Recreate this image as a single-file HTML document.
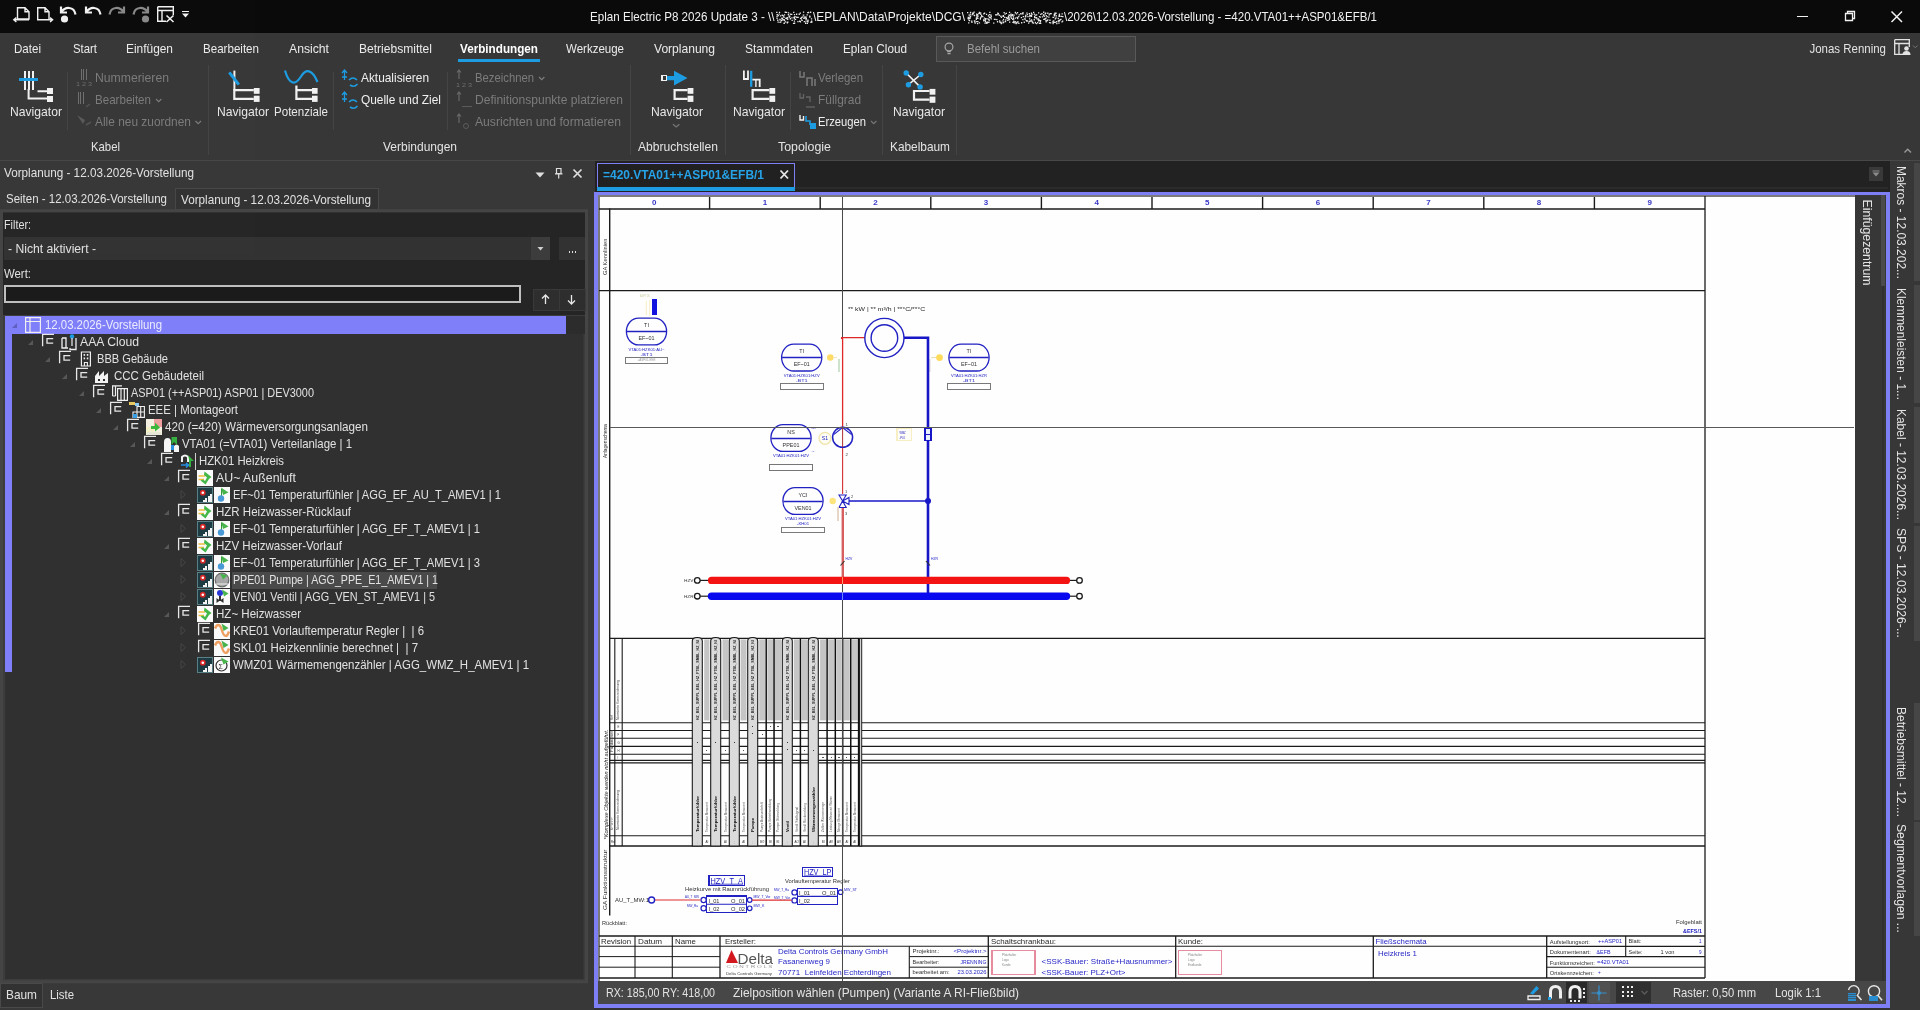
<!DOCTYPE html>
<html lang="de"><head><meta charset="utf-8"><title>Eplan Electric P8 2026</title>
<style>html,body{margin:0;padding:0;background:#383838;overflow:hidden}body{width:1920px;height:1010px;font-family:"Liberation Sans",sans-serif}svg{display:block;font-family:"Liberation Sans",sans-serif;will-change:transform;opacity:.9999}text{white-space:pre}</style></head>
<body>
<svg width="1920" height="1010" viewBox="0 0 1920 1010">
<rect x="0" y="0" width="1920" height="33" fill="#0b0b0b" shape-rendering="crispEdges"/>
<path d="M17.5 19 V7.7 H25 L29 11.7 V19 H17.5 M25 7.7 V11.7 H29" fill="none" stroke="#f2f2f2" stroke-width="1.4"/>
<path d="M29 19.8 H14 M16.4 17.6 L13.8 19.8 L16.4 22" fill="none" stroke="#f2f2f2" stroke-width="1.4"/>
<path d="M37.7 19 V7.7 H45 L49 11.7 V19 M45 7.7 V11.7 H49" fill="none" stroke="#f2f2f2" stroke-width="1.4"/>
<path d="M37 19.8 H52.4 M50 17.6 L52.6 19.8 L50 22" fill="none" stroke="#f2f2f2" stroke-width="1.4"/>
<path d="M61 6.5 V12.5 H67 M61.5 12 C65 6.5 74 6 75.5 14.5" fill="none" stroke="#f2f2f2" stroke-width="2.2"/>
<circle cx="64.5" cy="19" r="3.6" fill="#f2f2f2"/>
<path d="M86 6.5 V12.5 H92 M86.5 12 C90 6.5 99 6 100.5 14.5" fill="none" stroke="#f2f2f2" stroke-width="2.2"/>
<path d="M124 6.5 V12.5 H118 M123.5 12 C120 6.5 111 6 109.5 14.5" fill="none" stroke="#8a8a8a" stroke-width="2.2"/>
<path d="M148 6.5 V12.5 H142 M147.5 12 C144 6.5 135 6 133.5 14.5" fill="none" stroke="#8a8a8a" stroke-width="2.2"/>
<circle cx="145.5" cy="19" r="3.6" fill="#8a8a8a"/>
<path d="M157.7 6.7 H173.3 V15 M157.7 6.7 V21.3 H166 M157.7 10.5 H173.3 M162 10.5 V21.3" fill="none" stroke="#f2f2f2" stroke-width="1.4"/>
<path d="M166.5 15.5 L173.5 22 M173.5 15.5 L166.5 22" fill="none" stroke="#f2f2f2" stroke-width="1.6"/>
<line x1="182" y1="11.5" x2="189" y2="11.5" stroke="#f2f2f2" stroke-width="1.4" shape-rendering="crispEdges"/>
<path d="M182 13.6 H189 L185.5 17.4 Z" fill="#f2f2f2"/>
<line x1="1797" y1="16.5" x2="1808" y2="16.5" stroke="#f2f2f2" stroke-width="1.4" shape-rendering="crispEdges"/>
<path d="M1845.5 13.5 H1852.5 V20.5 H1845.5 Z M1847.5 13.5 V11.5 H1854.5 V18.5 H1852.5" fill="none" stroke="#f2f2f2" stroke-width="1.3"/>
<path d="M1891.5 11.5 L1902 22 M1902 11.5 L1891.5 22" fill="none" stroke="#f2f2f2" stroke-width="1.5"/>
<text x="590" y="21.2" font-size="13" fill="#f2f2f2" textLength="184.5" lengthAdjust="spacingAndGlyphs">Eplan Electric P8 2026 Update 3 - \\</text>
<path d="M780.3 21.2h1.3v1.3h-1.3zM803.0 14.4h1.3v1.3h-1.3zM793.3 16.7h1.3v1.3h-1.3zM799.0 20.6h1.3v1.3h-1.3zM778.9 11.8h1.3v1.3h-1.3zM805.6 16.5h1.3v1.3h-1.3zM802.9 11.5h1.3v1.3h-1.3zM791.5 19.8h1.3v1.3h-1.3zM783.7 22.4h1.3v1.3h-1.3zM808.0 11.9h1.3v1.3h-1.3zM776.4 17.7h1.3v1.3h-1.3zM809.3 15.9h1.3v1.3h-1.3zM783.3 16.4h1.3v1.3h-1.3zM776.5 14.0h1.3v1.3h-1.3zM791.3 17.2h1.3v1.3h-1.3zM783.9 14.2h1.3v1.3h-1.3zM783.4 16.8h1.3v1.3h-1.3zM785.9 11.7h1.3v1.3h-1.3zM805.7 17.9h1.3v1.3h-1.3zM798.6 13.6h1.3v1.3h-1.3zM811.2 21.4h1.3v1.3h-1.3zM779.9 15.3h1.3v1.3h-1.3zM801.5 19.7h1.3v1.3h-1.3zM809.2 16.4h1.3v1.3h-1.3zM805.4 19.2h1.3v1.3h-1.3zM786.4 18.3h1.3v1.3h-1.3zM807.3 21.2h1.3v1.3h-1.3zM793.7 18.3h1.3v1.3h-1.3zM776.7 14.3h1.3v1.3h-1.3zM804.2 16.3h1.3v1.3h-1.3zM781.7 17.8h1.3v1.3h-1.3zM800.8 19.3h1.3v1.3h-1.3zM789.0 16.5h1.3v1.3h-1.3zM793.8 20.5h1.3v1.3h-1.3zM794.3 16.0h1.3v1.3h-1.3zM793.1 11.8h1.3v1.3h-1.3zM777.1 19.6h1.3v1.3h-1.3zM810.9 18.3h1.3v1.3h-1.3zM789.7 13.5h1.3v1.3h-1.3zM793.6 22.8h1.3v1.3h-1.3zM803.2 17.7h1.3v1.3h-1.3zM806.5 14.2h1.3v1.3h-1.3zM794.0 22.5h1.3v1.3h-1.3zM796.3 16.8h1.3v1.3h-1.3zM785.2 17.8h1.3v1.3h-1.3zM810.0 11.6h1.3v1.3h-1.3zM803.7 20.9h1.3v1.3h-1.3zM807.4 20.0h1.3v1.3h-1.3zM804.6 17.5h1.3v1.3h-1.3zM795.7 16.4h1.3v1.3h-1.3zM777.5 21.5h1.3v1.3h-1.3zM796.0 13.8h1.3v1.3h-1.3zM793.7 17.1h1.3v1.3h-1.3zM788.3 15.5h1.3v1.3h-1.3zM794.9 18.7h1.3v1.3h-1.3zM797.5 16.8h1.3v1.3h-1.3zM776.5 14.1h1.3v1.3h-1.3zM781.9 18.2h1.3v1.3h-1.3zM806.5 20.7h1.3v1.3h-1.3zM804.2 20.9h1.3v1.3h-1.3zM784.7 21.2h1.3v1.3h-1.3zM799.7 12.5h1.3v1.3h-1.3zM776.1 11.7h1.3v1.3h-1.3zM802.7 14.4h1.3v1.3h-1.3zM779.4 18.7h1.3v1.3h-1.3zM787.9 12.3h1.3v1.3h-1.3zM781.2 17.6h1.3v1.3h-1.3zM781.6 14.6h1.3v1.3h-1.3zM801.1 16.7h1.3v1.3h-1.3zM787.1 16.9h1.3v1.3h-1.3zM776.4 15.9h1.3v1.3h-1.3zM790.7 13.7h1.3v1.3h-1.3zM779.4 21.8h1.3v1.3h-1.3zM793.9 13.9h1.3v1.3h-1.3zM797.3 20.9h1.3v1.3h-1.3zM776.2 11.7h1.3v1.3h-1.3zM780.8 19.8h1.3v1.3h-1.3zM781.3 19.6h1.3v1.3h-1.3zM799.9 17.8h1.3v1.3h-1.3zM783.4 22.7h1.3v1.3h-1.3zM804.2 17.4h1.3v1.3h-1.3zM783.5 19.0h1.3v1.3h-1.3zM789.7 18.1h1.3v1.3h-1.3zM787.1 18.8h1.3v1.3h-1.3zM777.6 14.9h1.3v1.3h-1.3zM810.3 21.6h1.3v1.3h-1.3zM786.5 21.4h1.3v1.3h-1.3zM786.7 22.3h1.3v1.3h-1.3zM802.3 16.3h1.3v1.3h-1.3zM784.6 11.6h1.3v1.3h-1.3zM807.1 11.9h1.3v1.3h-1.3zM805.0 22.6h1.3v1.3h-1.3zM796.0 13.5h1.3v1.3h-1.3zM806.7 22.7h1.3v1.3h-1.3zM800.8 17.4h1.3v1.3h-1.3zM789.1 15.5h1.3v1.3h-1.3zM782.9 19.3h1.3v1.3h-1.3zM791.1 13.7h1.3v1.3h-1.3zM779.3 19.2h1.3v1.3h-1.3zM786.2 17.2h1.3v1.3h-1.3zM787.2 21.5h1.3v1.3h-1.3zM807.9 11.7h1.3v1.3h-1.3zM782.7 15.3h1.3v1.3h-1.3zM811.0 20.5h1.3v1.3h-1.3zM787.7 13.9h1.3v1.3h-1.3zM799.8 21.1h1.3v1.3h-1.3zM809.1 15.5h1.3v1.3h-1.3zM807.3 19.4h1.3v1.3h-1.3zM792.9 22.8h1.3v1.3h-1.3zM783.9 19.8h1.3v1.3h-1.3zM778.5 13.5h1.3v1.3h-1.3z" fill="#e8e8e8"/>
<text x="813" y="21.2" font-size="13" fill="#f2f2f2" textLength="152" lengthAdjust="spacingAndGlyphs">\EPLAN\Data\Projekte\DCG\</text>
<path d="M1058.3 22.4h1.3v1.3h-1.3zM971.9 12.5h1.3v1.3h-1.3zM1046.7 20.0h1.3v1.3h-1.3zM1030.8 15.0h1.3v1.3h-1.3zM1024.7 18.5h1.3v1.3h-1.3zM1022.3 13.3h1.3v1.3h-1.3zM1007.8 16.0h1.3v1.3h-1.3zM1035.9 22.9h1.3v1.3h-1.3zM1057.6 17.8h1.3v1.3h-1.3zM1009.2 14.6h1.3v1.3h-1.3zM969.9 11.8h1.3v1.3h-1.3zM1011.1 15.2h1.3v1.3h-1.3zM1003.0 21.8h1.3v1.3h-1.3zM1017.0 17.9h1.3v1.3h-1.3zM989.2 11.8h1.3v1.3h-1.3zM997.7 13.1h1.3v1.3h-1.3zM1015.5 23.0h1.3v1.3h-1.3zM1031.3 13.6h1.3v1.3h-1.3zM1052.3 20.7h1.3v1.3h-1.3zM1037.0 21.9h1.3v1.3h-1.3zM1039.7 20.6h1.3v1.3h-1.3zM1000.5 22.8h1.3v1.3h-1.3zM1058.8 13.4h1.3v1.3h-1.3zM1038.9 19.7h1.3v1.3h-1.3zM1010.8 17.6h1.3v1.3h-1.3zM1013.5 22.1h1.3v1.3h-1.3zM1014.6 21.1h1.3v1.3h-1.3zM1000.5 21.7h1.3v1.3h-1.3zM1052.9 16.8h1.3v1.3h-1.3zM1021.0 22.1h1.3v1.3h-1.3zM1036.0 17.1h1.3v1.3h-1.3zM987.8 15.2h1.3v1.3h-1.3zM1033.7 13.4h1.3v1.3h-1.3zM1053.7 14.6h1.3v1.3h-1.3zM1054.0 15.1h1.3v1.3h-1.3zM1058.4 19.6h1.3v1.3h-1.3zM1014.9 17.5h1.3v1.3h-1.3zM1029.0 18.3h1.3v1.3h-1.3zM996.4 13.9h1.3v1.3h-1.3zM1015.6 22.2h1.3v1.3h-1.3zM1026.3 12.4h1.3v1.3h-1.3zM1045.3 19.8h1.3v1.3h-1.3zM1053.6 13.7h1.3v1.3h-1.3zM1038.0 12.2h1.3v1.3h-1.3zM1029.2 14.6h1.3v1.3h-1.3zM988.3 21.6h1.3v1.3h-1.3zM976.7 17.5h1.3v1.3h-1.3zM1048.5 14.3h1.3v1.3h-1.3zM986.7 21.6h1.3v1.3h-1.3zM1007.1 19.7h1.3v1.3h-1.3zM969.6 15.7h1.3v1.3h-1.3zM983.0 19.2h1.3v1.3h-1.3zM974.5 22.5h1.3v1.3h-1.3zM968.9 19.9h1.3v1.3h-1.3zM968.5 14.4h1.3v1.3h-1.3zM1044.6 13.3h1.3v1.3h-1.3zM984.1 19.5h1.3v1.3h-1.3zM1003.5 12.0h1.3v1.3h-1.3zM1061.5 13.2h1.3v1.3h-1.3zM970.0 15.5h1.3v1.3h-1.3zM1025.6 20.0h1.3v1.3h-1.3zM977.4 15.4h1.3v1.3h-1.3zM969.5 16.7h1.3v1.3h-1.3zM1040.0 20.0h1.3v1.3h-1.3zM1053.1 20.2h1.3v1.3h-1.3zM1049.3 19.6h1.3v1.3h-1.3zM1011.9 14.1h1.3v1.3h-1.3zM1029.9 15.1h1.3v1.3h-1.3zM976.3 16.6h1.3v1.3h-1.3zM1050.5 13.0h1.3v1.3h-1.3zM1022.7 16.0h1.3v1.3h-1.3zM1015.9 13.2h1.3v1.3h-1.3zM1058.6 14.5h1.3v1.3h-1.3zM1024.7 16.3h1.3v1.3h-1.3zM968.2 17.9h1.3v1.3h-1.3zM980.0 12.2h1.3v1.3h-1.3zM969.7 13.4h1.3v1.3h-1.3zM975.7 18.8h1.3v1.3h-1.3zM1015.3 22.8h1.3v1.3h-1.3zM1056.2 22.9h1.3v1.3h-1.3zM988.8 16.6h1.3v1.3h-1.3zM990.6 18.3h1.3v1.3h-1.3zM1026.4 20.7h1.3v1.3h-1.3zM1034.6 14.5h1.3v1.3h-1.3zM1007.1 17.6h1.3v1.3h-1.3zM967.0 11.9h1.3v1.3h-1.3zM1005.7 12.8h1.3v1.3h-1.3zM1036.0 14.3h1.3v1.3h-1.3zM976.1 13.6h1.3v1.3h-1.3zM988.7 14.0h1.3v1.3h-1.3zM1016.5 16.8h1.3v1.3h-1.3zM996.2 18.9h1.3v1.3h-1.3zM986.9 21.9h1.3v1.3h-1.3zM1059.0 19.9h1.3v1.3h-1.3zM1008.1 17.4h1.3v1.3h-1.3zM1022.3 12.1h1.3v1.3h-1.3zM1006.6 17.5h1.3v1.3h-1.3zM983.9 12.6h1.3v1.3h-1.3zM1043.6 15.7h1.3v1.3h-1.3zM1016.3 22.1h1.3v1.3h-1.3zM1025.1 14.8h1.3v1.3h-1.3zM1060.9 15.8h1.3v1.3h-1.3zM968.3 19.4h1.3v1.3h-1.3zM976.2 15.0h1.3v1.3h-1.3zM1047.2 19.2h1.3v1.3h-1.3zM968.0 16.7h1.3v1.3h-1.3zM1005.9 17.1h1.3v1.3h-1.3zM986.5 18.3h1.3v1.3h-1.3zM973.6 14.8h1.3v1.3h-1.3zM1002.3 22.3h1.3v1.3h-1.3zM973.8 20.2h1.3v1.3h-1.3zM985.0 18.1h1.3v1.3h-1.3zM1004.1 16.8h1.3v1.3h-1.3zM1038.8 16.0h1.3v1.3h-1.3zM978.2 12.9h1.3v1.3h-1.3zM974.2 21.3h1.3v1.3h-1.3zM1028.0 22.5h1.3v1.3h-1.3zM1033.0 11.8h1.3v1.3h-1.3zM1029.8 20.4h1.3v1.3h-1.3zM1036.0 17.2h1.3v1.3h-1.3zM1000.8 16.8h1.3v1.3h-1.3zM1043.2 14.6h1.3v1.3h-1.3zM1017.0 17.0h1.3v1.3h-1.3zM1058.2 20.8h1.3v1.3h-1.3zM1056.0 21.1h1.3v1.3h-1.3zM995.0 14.2h1.3v1.3h-1.3zM1013.4 14.5h1.3v1.3h-1.3zM1007.6 19.3h1.3v1.3h-1.3zM1054.7 18.2h1.3v1.3h-1.3zM1045.0 12.6h1.3v1.3h-1.3zM1000.7 23.0h1.3v1.3h-1.3zM980.6 16.3h1.3v1.3h-1.3zM972.9 12.5h1.3v1.3h-1.3zM1052.5 22.9h1.3v1.3h-1.3zM1028.7 13.0h1.3v1.3h-1.3zM995.0 14.2h1.3v1.3h-1.3zM1030.9 19.3h1.3v1.3h-1.3zM1008.6 17.5h1.3v1.3h-1.3zM977.3 17.7h1.3v1.3h-1.3zM1057.7 20.2h1.3v1.3h-1.3zM975.7 17.4h1.3v1.3h-1.3zM1035.2 14.5h1.3v1.3h-1.3zM1052.4 16.8h1.3v1.3h-1.3zM1034.0 16.1h1.3v1.3h-1.3zM1062.0 20.5h1.3v1.3h-1.3zM1021.6 13.2h1.3v1.3h-1.3zM1008.9 11.8h1.3v1.3h-1.3zM1023.6 21.6h1.3v1.3h-1.3zM983.8 17.4h1.3v1.3h-1.3zM1012.8 16.2h1.3v1.3h-1.3zM1034.7 22.3h1.3v1.3h-1.3zM1034.2 16.9h1.3v1.3h-1.3zM1058.8 15.3h1.3v1.3h-1.3zM1038.1 19.1h1.3v1.3h-1.3zM1039.6 21.3h1.3v1.3h-1.3zM988.1 18.6h1.3v1.3h-1.3zM1005.2 19.2h1.3v1.3h-1.3zM1060.3 18.8h1.3v1.3h-1.3zM967.6 16.8h1.3v1.3h-1.3zM1034.8 21.7h1.3v1.3h-1.3zM1028.9 20.9h1.3v1.3h-1.3zM968.1 22.3h1.3v1.3h-1.3zM1036.5 18.5h1.3v1.3h-1.3zM1053.4 21.7h1.3v1.3h-1.3zM976.1 20.9h1.3v1.3h-1.3zM1040.1 13.8h1.3v1.3h-1.3zM1037.9 18.2h1.3v1.3h-1.3zM984.9 20.7h1.3v1.3h-1.3zM979.7 18.5h1.3v1.3h-1.3zM1008.2 14.4h1.3v1.3h-1.3zM1020.8 16.9h1.3v1.3h-1.3zM986.2 22.6h1.3v1.3h-1.3zM973.5 11.5h1.3v1.3h-1.3zM1013.1 21.1h1.3v1.3h-1.3zM1029.7 20.2h1.3v1.3h-1.3zM1013.1 19.3h1.3v1.3h-1.3zM998.6 14.6h1.3v1.3h-1.3zM1014.8 11.8h1.3v1.3h-1.3zM974.2 20.2h1.3v1.3h-1.3zM983.2 20.1h1.3v1.3h-1.3zM1041.8 16.2h1.3v1.3h-1.3zM1031.3 20.6h1.3v1.3h-1.3zM1049.4 13.1h1.3v1.3h-1.3zM982.1 15.9h1.3v1.3h-1.3zM1011.1 14.9h1.3v1.3h-1.3zM967.5 17.9h1.3v1.3h-1.3zM1059.3 15.7h1.3v1.3h-1.3zM1018.1 15.9h1.3v1.3h-1.3zM1009.0 21.5h1.3v1.3h-1.3zM996.1 19.0h1.3v1.3h-1.3zM1012.9 17.7h1.3v1.3h-1.3zM1054.3 12.4h1.3v1.3h-1.3zM1045.6 15.0h1.3v1.3h-1.3zM1028.5 20.7h1.3v1.3h-1.3zM1029.2 16.0h1.3v1.3h-1.3zM1047.2 12.6h1.3v1.3h-1.3zM1027.3 16.0h1.3v1.3h-1.3zM1017.4 21.3h1.3v1.3h-1.3zM1043.1 18.7h1.3v1.3h-1.3zM996.1 14.2h1.3v1.3h-1.3zM1010.4 14.2h1.3v1.3h-1.3zM993.1 22.5h1.3v1.3h-1.3zM977.2 20.9h1.3v1.3h-1.3zM1002.9 15.7h1.3v1.3h-1.3zM997.1 12.4h1.3v1.3h-1.3zM1010.4 13.4h1.3v1.3h-1.3zM1008.9 14.9h1.3v1.3h-1.3zM1052.4 22.1h1.3v1.3h-1.3zM1008.9 18.9h1.3v1.3h-1.3zM1055.7 15.3h1.3v1.3h-1.3zM976.1 14.2h1.3v1.3h-1.3zM984.7 19.3h1.3v1.3h-1.3zM1002.4 15.6h1.3v1.3h-1.3zM1042.8 14.2h1.3v1.3h-1.3zM1044.1 18.8h1.3v1.3h-1.3zM1004.9 21.0h1.3v1.3h-1.3zM999.4 21.6h1.3v1.3h-1.3zM1055.4 17.3h1.3v1.3h-1.3zM1032.7 22.4h1.3v1.3h-1.3zM1037.8 20.1h1.3v1.3h-1.3zM1050.0 22.3h1.3v1.3h-1.3zM1038.8 22.8h1.3v1.3h-1.3zM994.5 18.7h1.3v1.3h-1.3zM1030.9 15.7h1.3v1.3h-1.3zM1004.4 13.5h1.3v1.3h-1.3zM1058.4 15.6h1.3v1.3h-1.3zM1012.3 21.8h1.3v1.3h-1.3zM984.4 22.5h1.3v1.3h-1.3zM978.7 11.8h1.3v1.3h-1.3zM1000.2 15.6h1.3v1.3h-1.3zM1054.6 21.7h1.3v1.3h-1.3zM1039.6 16.5h1.3v1.3h-1.3zM1018.6 14.2h1.3v1.3h-1.3zM1046.5 16.0h1.3v1.3h-1.3zM993.8 18.8h1.3v1.3h-1.3zM981.0 15.1h1.3v1.3h-1.3zM1055.4 12.6h1.3v1.3h-1.3zM980.2 13.8h1.3v1.3h-1.3zM990.6 16.3h1.3v1.3h-1.3zM990.5 15.4h1.3v1.3h-1.3zM990.2 14.3h1.3v1.3h-1.3zM1025.1 15.4h1.3v1.3h-1.3zM1002.3 20.3h1.3v1.3h-1.3zM972.4 13.2h1.3v1.3h-1.3zM1048.2 16.4h1.3v1.3h-1.3zM1041.3 13.0h1.3v1.3h-1.3zM1016.7 21.2h1.3v1.3h-1.3zM999.0 20.3h1.3v1.3h-1.3zM1025.1 16.0h1.3v1.3h-1.3zM1062.2 16.0h1.3v1.3h-1.3zM1012.0 18.6h1.3v1.3h-1.3zM996.9 21.1h1.3v1.3h-1.3zM1023.9 18.3h1.3v1.3h-1.3zM1018.2 22.8h1.3v1.3h-1.3zM1061.4 21.2h1.3v1.3h-1.3zM1010.1 16.2h1.3v1.3h-1.3zM1016.9 12.0h1.3v1.3h-1.3zM976.9 22.9h1.3v1.3h-1.3zM978.8 22.3h1.3v1.3h-1.3zM1031.8 22.0h1.3v1.3h-1.3zM973.9 15.0h1.3v1.3h-1.3zM1043.1 11.6h1.3v1.3h-1.3zM976.7 15.5h1.3v1.3h-1.3zM983.1 13.2h1.3v1.3h-1.3zM1030.8 12.6h1.3v1.3h-1.3zM1059.8 19.0h1.3v1.3h-1.3zM971.3 21.8h1.3v1.3h-1.3zM989.7 17.0h1.3v1.3h-1.3zM1020.1 13.1h1.3v1.3h-1.3zM1014.7 12.2h1.3v1.3h-1.3zM985.7 22.1h1.3v1.3h-1.3zM1045.4 17.5h1.3v1.3h-1.3zM1032.0 21.6h1.3v1.3h-1.3zM979.9 17.2h1.3v1.3h-1.3zM979.1 12.8h1.3v1.3h-1.3zM976.9 13.9h1.3v1.3h-1.3zM971.6 14.0h1.3v1.3h-1.3zM1002.9 18.7h1.3v1.3h-1.3zM1048.9 21.9h1.3v1.3h-1.3zM1035.4 17.3h1.3v1.3h-1.3zM1054.5 13.4h1.3v1.3h-1.3zM976.6 20.9h1.3v1.3h-1.3zM1026.7 13.9h1.3v1.3h-1.3zM1002.7 14.9h1.3v1.3h-1.3zM1007.9 16.4h1.3v1.3h-1.3zM1004.7 20.7h1.3v1.3h-1.3zM1044.4 18.0h1.3v1.3h-1.3zM1011.9 14.8h1.3v1.3h-1.3zM1040.0 22.8h1.3v1.3h-1.3zM988.5 19.6h1.3v1.3h-1.3zM1033.6 19.1h1.3v1.3h-1.3zM969.4 17.8h1.3v1.3h-1.3zM985.9 13.7h1.3v1.3h-1.3zM1022.2 18.9h1.3v1.3h-1.3zM1026.5 20.0h1.3v1.3h-1.3zM1034.0 17.0h1.3v1.3h-1.3zM971.1 20.4h1.3v1.3h-1.3zM1045.5 21.1h1.3v1.3h-1.3z" fill="#e8e8e8"/>
<text x="1064" y="21.2" font-size="13" fill="#f2f2f2" textLength="313" lengthAdjust="spacingAndGlyphs">\2026\12.03.2026-Vorstellung - =420.VTA01++ASP01&amp;EFB/1</text>
<rect x="0" y="33" width="1920" height="128" fill="#383838" shape-rendering="crispEdges"/>
<text x="14" y="52.5" font-size="13" fill="#ececec" textLength="27" lengthAdjust="spacingAndGlyphs">Datei</text>
<text x="73" y="52.5" font-size="13" fill="#ececec" textLength="24" lengthAdjust="spacingAndGlyphs">Start</text>
<text x="126" y="52.5" font-size="13" fill="#ececec" textLength="47" lengthAdjust="spacingAndGlyphs">Einfügen</text>
<text x="203" y="52.5" font-size="13" fill="#ececec" textLength="56" lengthAdjust="spacingAndGlyphs">Bearbeiten</text>
<text x="289" y="52.5" font-size="13" fill="#ececec" textLength="40" lengthAdjust="spacingAndGlyphs">Ansicht</text>
<text x="359" y="52.5" font-size="13" fill="#ececec" textLength="73" lengthAdjust="spacingAndGlyphs">Betriebsmittel</text>
<text x="566" y="52.5" font-size="13" fill="#ececec" textLength="58" lengthAdjust="spacingAndGlyphs">Werkzeuge</text>
<text x="654" y="52.5" font-size="13" fill="#ececec" textLength="61" lengthAdjust="spacingAndGlyphs">Vorplanung</text>
<text x="745" y="52.5" font-size="13" fill="#ececec" textLength="68" lengthAdjust="spacingAndGlyphs">Stammdaten</text>
<text x="843" y="52.5" font-size="13" fill="#ececec" textLength="64" lengthAdjust="spacingAndGlyphs">Eplan Cloud</text>
<text x="460" y="52.5" font-size="13" fill="#ffffff" textLength="78" lengthAdjust="spacingAndGlyphs" font-weight="bold">Verbindungen</text>
<rect x="458" y="59" width="82" height="3" fill="#1e9de2" shape-rendering="crispEdges"/>
<rect x="936.5" y="36.5" width="199" height="25" fill="#414141" stroke="#5a5a5a" stroke-width="1" shape-rendering="crispEdges"/>
<circle cx="949" cy="47" r="3.9" fill="none" stroke="#a8a8a8" stroke-width="1.2"/>
<path d="M947.2 51.6 H950.8 M947.5 53.6 H950.5" fill="none" stroke="#a8a8a8" stroke-width="1.1"/>
<text x="967" y="52.5" font-size="13" fill="#9c9c9c" textLength="73" lengthAdjust="spacingAndGlyphs">Befehl suchen</text>
<text x="1809.5" y="52.5" font-size="13" fill="#e4e4e4" textLength="76.5" lengthAdjust="spacingAndGlyphs">Jonas Renning</text>
<path d="M1894.7 39.7 H1909.3 V47 M1894.7 39.7 V54.3 H1903 M1894.7 43.5 H1909.3 M1899 43.5 V54.3" fill="none" stroke="#e4e4e4" stroke-width="1.3"/>
<circle cx="1906.5" cy="48.5" r="2.3" fill="#e4e4e4"/>
<path d="M1902.5 55 Q1902.5 51 1906.5 51 Q1910.5 51 1910.5 55 Z" fill="#e4e4e4"/>
<path d="M1913 45.5 L1915.3 47.8 L1917.6 45.5" fill="none" stroke="#777" stroke-width="1"/>
<path d="M1904.5 152.5 L1907.7 149.3 L1911 152.5" fill="none" stroke="#9a9a9a" stroke-width="1.4"/>
<line x1="208.5" y1="65" x2="208.5" y2="155" stroke="#454545" stroke-width="1" shape-rendering="crispEdges"/>
<line x1="630.5" y1="65" x2="630.5" y2="155" stroke="#454545" stroke-width="1" shape-rendering="crispEdges"/>
<line x1="725.5" y1="65" x2="725.5" y2="155" stroke="#454545" stroke-width="1" shape-rendering="crispEdges"/>
<line x1="882.5" y1="65" x2="882.5" y2="155" stroke="#454545" stroke-width="1" shape-rendering="crispEdges"/>
<line x1="956.5" y1="65" x2="956.5" y2="155" stroke="#454545" stroke-width="1" shape-rendering="crispEdges"/>
<line x1="67.5" y1="72" x2="67.5" y2="130" stroke="#454545" stroke-width="1" shape-rendering="crispEdges"/>
<line x1="333.5" y1="72" x2="333.5" y2="130" stroke="#454545" stroke-width="1" shape-rendering="crispEdges"/>
<line x1="447.5" y1="72" x2="447.5" y2="130" stroke="#454545" stroke-width="1" shape-rendering="crispEdges"/>
<line x1="790.5" y1="72" x2="790.5" y2="130" stroke="#454545" stroke-width="1" shape-rendering="crispEdges"/>
<text x="91" y="150.5" font-size="13" fill="#e4e4e4" textLength="29" lengthAdjust="spacingAndGlyphs">Kabel</text>
<text x="383" y="150.5" font-size="13" fill="#e4e4e4" textLength="74" lengthAdjust="spacingAndGlyphs">Verbindungen</text>
<text x="638" y="150.5" font-size="13" fill="#e4e4e4" textLength="80" lengthAdjust="spacingAndGlyphs">Abbruchstellen</text>
<text x="778" y="150.5" font-size="13" fill="#e4e4e4" textLength="53" lengthAdjust="spacingAndGlyphs">Topologie</text>
<text x="890" y="150.5" font-size="13" fill="#e4e4e4" textLength="60" lengthAdjust="spacingAndGlyphs">Kabelbaum</text>
<text x="10" y="115.5" font-size="13" fill="#e8e8e8" textLength="52" lengthAdjust="spacingAndGlyphs">Navigator</text>
<text x="217" y="115.5" font-size="13" fill="#e8e8e8" textLength="52" lengthAdjust="spacingAndGlyphs">Navigator</text>
<text x="651" y="115.5" font-size="13" fill="#e8e8e8" textLength="52" lengthAdjust="spacingAndGlyphs">Navigator</text>
<text x="733" y="115.5" font-size="13" fill="#e8e8e8" textLength="52" lengthAdjust="spacingAndGlyphs">Navigator</text>
<text x="893" y="115.5" font-size="13" fill="#e8e8e8" textLength="52" lengthAdjust="spacingAndGlyphs">Navigator</text>
<text x="274" y="115.5" font-size="13" fill="#e8e8e8" textLength="54" lengthAdjust="spacingAndGlyphs">Potenziale</text>
<path d="M673 124.2 L676.2 127 L679.4 124.2" fill="none" stroke="#777" stroke-width="1.3"/>
<rect x="23.5" y="70.5" width="2" height="19" fill="#f2f2f2" shape-rendering="crispEdges"/>
<rect x="27.5" y="70.5" width="2" height="19" fill="#f2f2f2" shape-rendering="crispEdges"/>
<rect x="31.5" y="70.5" width="2" height="19" fill="#f2f2f2" shape-rendering="crispEdges"/>
<rect x="18.5" y="77.5" width="19.5" height="3.6" fill="#1e9de2" shape-rendering="crispEdges"/>
<path d="M28.6 89 V98.6 H47 M37.5 91.2 H47" fill="none" stroke="#f2f2f2" stroke-width="2"/>
<rect x="47" y="88" width="6" height="6" fill="#f2f2f2" shape-rendering="crispEdges"/>
<rect x="47" y="96" width="6" height="6" fill="#f2f2f2" shape-rendering="crispEdges"/>
<path d="M234.4 70.6 V90" fill="none" stroke="#f2f2f2" stroke-width="2"/>
<path d="M229.3 72.3 L238.8 84.6" fill="none" stroke="#1e9de2" stroke-width="3"/>
<path d="M253.8 90.1 H234.3 V98.8 H253.8" fill="none" stroke="#f2f2f2" stroke-width="2.2"/>
<rect x="253.8" y="88" width="5.8" height="5.8" fill="#f2f2f2"/>
<rect x="253.8" y="95.7" width="5.8" height="6.2" fill="#f2f2f2"/>
<path d="M285 70.5 C289 84.5 295 86 301 76.5 C306 68.5 312 69 317.5 82" fill="none" stroke="#1e9de2" stroke-width="2.2"/>
<path d="M296.4 85.6 V98.8 H312 M296.4 90.1 H312" fill="none" stroke="#f2f2f2" stroke-width="2.2"/>
<rect x="312" y="88" width="5.6" height="5.8" fill="#f2f2f2"/>
<rect x="312" y="95.7" width="5.6" height="6.2" fill="#f2f2f2"/>
<rect x="661.8" y="75.7" width="4.6" height="4.6" fill="none" stroke="#f2f2f2" stroke-width="1.5" shape-rendering="crispEdges"/>
<path d="M667 76 H674 V70.8 L687.5 78.1 L674 85.4 V80.2 H667 Z" fill="#1e9de2"/>
<path d="M687.6 90.1 H674.6 V98.8 H687.6" fill="none" stroke="#f2f2f2" stroke-width="2.2"/>
<rect x="687.6" y="88" width="5.8" height="5.8" fill="#f2f2f2"/>
<rect x="687.6" y="95.7" width="5.8" height="6.2" fill="#f2f2f2"/>
<path d="M743.9 70.6 V79 H748 V70.6" fill="none" stroke="#f2f2f2" stroke-width="1.8"/>
<path d="M751.2 70.8 V86.8" fill="none" stroke="#1e9de2" stroke-width="2.3"/>
<path d="M752.4 79.7 H759.7 V87" fill="none" stroke="#f2f2f2" stroke-width="1.8"/>
<path d="M755.9 80 V87" fill="none" stroke="#f2f2f2" stroke-width="1.4"/>
<path d="M769.4 90.1 H752.6 V98.8 H769.4" fill="none" stroke="#f2f2f2" stroke-width="2.2"/>
<rect x="769.4" y="88" width="5.8" height="5.8" fill="#f2f2f2"/>
<rect x="769.4" y="95.7" width="5.8" height="6.2" fill="#f2f2f2"/>
<path d="M906.2 73 L920.1 86.9 M920.8 74.5 L908.4 84.7" fill="none" stroke="#f2f2f2" stroke-width="1.6"/>
<circle cx="906.2" cy="73" r="2.7" fill="#1e9de2"/>
<circle cx="920.8" cy="74.5" r="2.7" fill="#1e9de2"/>
<circle cx="908.4" cy="84.7" r="2.7" fill="#1e9de2"/>
<circle cx="920.1" cy="86.9" r="2.7" fill="#1e9de2"/>
<path d="M929.6 91 H914 V99.7 H929.6" fill="none" stroke="#f2f2f2" stroke-width="2.2"/>
<rect x="929.6" y="88.9" width="5.8" height="5.8" fill="#f2f2f2"/>
<rect x="929.6" y="96.6" width="5.8" height="6.2" fill="#f2f2f2"/>
<text x="95" y="81.5" font-size="13" fill="#7d7d7d" textLength="74" lengthAdjust="spacingAndGlyphs">Nummerieren</text>
<text x="95" y="103.5" font-size="13" fill="#7d7d7d" textLength="56" lengthAdjust="spacingAndGlyphs">Bearbeiten</text>
<text x="95" y="125.5" font-size="13" fill="#7d7d7d" textLength="96" lengthAdjust="spacingAndGlyphs">Alle neu zuordnen</text>
<path d="M156 99 L158.7 101.7 L161.4 99" fill="none" stroke="#7d7d7d" stroke-width="1.2"/>
<path d="M195.5 121 L198.2 123.7 L201 121" fill="none" stroke="#7d7d7d" stroke-width="1.2"/>
<line x1="81" y1="69" x2="81" y2="80" stroke="#707070" stroke-width="1" shape-rendering="crispEdges"/>
<line x1="83.5" y1="69" x2="83.5" y2="80" stroke="#707070" stroke-width="1" shape-rendering="crispEdges"/>
<line x1="86" y1="69" x2="86" y2="80" stroke="#707070" stroke-width="1" shape-rendering="crispEdges"/>
<text x="76" y="86" font-size="6" fill="#707070" textLength="16" lengthAdjust="spacingAndGlyphs">1 2 3</text>
<line x1="78" y1="92" x2="78" y2="104" stroke="#707070" stroke-width="1" shape-rendering="crispEdges"/>
<line x1="80.5" y1="92" x2="80.5" y2="104" stroke="#707070" stroke-width="1" shape-rendering="crispEdges"/>
<line x1="83" y1="92" x2="83" y2="104" stroke="#707070" stroke-width="1" shape-rendering="crispEdges"/>
<path d="M86 107 L90 104" fill="none" stroke="#555" stroke-width="1.5"/>
<path d="M77 115 L83 124 L85 120 Z" fill="#5a5a5a"/>
<path d="M86 125 L91 122" fill="none" stroke="#555" stroke-width="1.5"/>
<text x="361" y="81.5" font-size="13" fill="#f0f0f0" textLength="68" lengthAdjust="spacingAndGlyphs">Aktualisieren</text>
<text x="361" y="103.5" font-size="13" fill="#f0f0f0" textLength="80" lengthAdjust="spacingAndGlyphs">Quelle und Ziel</text>
<path d="M344.5 70 V80 M342 73 L344.5 70 L347 73 M342 77 L347 77" fill="none" stroke="#1e9de2" stroke-width="1.3"/>
<path d="M349 80 Q353 76 357 80 M350 85 Q354 88 357.5 84" fill="none" stroke="#1e9de2" stroke-width="1.6"/>
<path d="M344.5 92 V102 M342 95 L344.5 92 L347 95 M342 99 L347 99" fill="none" stroke="#1e9de2" stroke-width="1.3"/>
<path d="M349 102 Q353 98 357 102 M350 107 Q354 110 357.5 106" fill="none" stroke="#1e9de2" stroke-width="1.6"/>
<text x="475" y="81.5" font-size="13" fill="#7d7d7d" textLength="59" lengthAdjust="spacingAndGlyphs">Bezeichnen</text>
<path d="M539 77 L541.7 79.7 L544.4 77" fill="none" stroke="#7d7d7d" stroke-width="1.2"/>
<text x="475" y="103.5" font-size="13" fill="#7d7d7d" textLength="148" lengthAdjust="spacingAndGlyphs">Definitionspunkte platzieren</text>
<text x="475" y="125.5" font-size="13" fill="#7d7d7d" textLength="146" lengthAdjust="spacingAndGlyphs">Ausrichten und formatieren</text>
<path d="M459 70 V79 M457 72.5 L459 70 L461 72.5" fill="none" stroke="#6a6a6a" stroke-width="1.2"/>
<path d="M459 92 V101 M457 94.5 L459 92 L461 94.5" fill="none" stroke="#6a6a6a" stroke-width="1.2"/>
<path d="M459 114 V123 M457 116.5 L459 114 L461 116.5" fill="none" stroke="#6a6a6a" stroke-width="1.2"/>
<text x="456" y="87" font-size="6" fill="#707070" textLength="16" lengthAdjust="spacingAndGlyphs">1 2 3</text>
<line x1="462" y1="106" x2="472" y2="106" stroke="#5c5c5c" stroke-width="1" shape-rendering="crispEdges"/>
<circle cx="466" cy="126" r="2.5" fill="none" stroke="#5c5c5c" stroke-width="1"/>
<text x="818" y="81.5" font-size="13" fill="#7d7d7d" textLength="45" lengthAdjust="spacingAndGlyphs">Verlegen</text>
<text x="818" y="103.5" font-size="13" fill="#7d7d7d" textLength="43" lengthAdjust="spacingAndGlyphs">Füllgrad</text>
<text x="818" y="125.5" font-size="13" fill="#f0f0f0" textLength="48" lengthAdjust="spacingAndGlyphs">Erzeugen</text>
<path d="M871 121 L873.7 123.7 L876.4 121" fill="none" stroke="#777" stroke-width="1.2"/>
<path d="M800 71 V77 H804 V72 M807 86 V78 H812 V86 M815 86 V79" fill="none" stroke="#7a7a7a" stroke-width="1.5"/>
<path d="M800 93 V98 H803.5 V94 M806 97 H810 V102" fill="none" stroke="#666" stroke-width="1.3"/>
<line x1="806" y1="107" x2="815" y2="107" stroke="#555" stroke-width="1.5" shape-rendering="crispEdges"/>
<path d="M800 115 V120 H803.5 V116" fill="none" stroke="#f2f2f2" stroke-width="1.4"/>
<path d="M806 116 V121 H810 V125" fill="none" stroke="#1e9de2" stroke-width="1.6"/>
<rect x="810" y="123" width="6" height="6" fill="#1e9de2" shape-rendering="crispEdges"/>
<rect x="0" y="160" width="1920" height="1" fill="#494949" shape-rendering="crispEdges"/>
<rect x="0" y="161" width="594.6" height="849" fill="#393939" shape-rendering="crispEdges"/>
<text x="4" y="177" font-size="13" fill="#e2e2e2" textLength="190" lengthAdjust="spacingAndGlyphs">Vorplanung - 12.03.2026-Vorstellung</text>
<path d="M535.5 172.5 H544.5 L540 177.5 Z" fill="#e0e0e0"/>
<path d="M556.5 168.5 H561 V173.5 H556.5 Z M555 173.8 H562.5 M558.7 174 V178.5" fill="none" stroke="#e0e0e0" stroke-width="1.2"/>
<path d="M573.5 169.5 L581.5 177.5 M581.5 169.5 L573.5 177.5" fill="none" stroke="#e0e0e0" stroke-width="1.7"/>
<text x="6" y="203" font-size="13" fill="#e2e2e2" textLength="161" lengthAdjust="spacingAndGlyphs">Seiten - 12.03.2026-Vorstellung</text>
<rect x="175.5" y="188.5" width="203" height="21" fill="#333333" stroke="#484848" stroke-width="1" shape-rendering="crispEdges"/>
<text x="181" y="203.5" font-size="13" fill="#e2e2e2" textLength="190" lengthAdjust="spacingAndGlyphs">Vorplanung - 12.03.2026-Vorstellung</text>
<rect x="0" y="209.3" width="588" height="774" fill="#464646"/>
<rect x="3" y="212.4" width="582" height="102.6" fill="#262626"/>
<text x="4" y="229" font-size="13" fill="#e2e2e2" textLength="27" lengthAdjust="spacingAndGlyphs">Filter:</text>
<rect x="4" y="237" width="546" height="23" fill="#333333" shape-rendering="crispEdges"/>
<rect x="531" y="237" width="19" height="23" fill="#3d3d3d" shape-rendering="crispEdges"/>
<text x="8" y="253" font-size="13" fill="#e2e2e2" textLength="88" lengthAdjust="spacingAndGlyphs">- Nicht aktiviert -</text>
<path d="M537.5 247 H543.5 L540.5 250.6 Z" fill="#d0d0d0"/>
<rect x="559" y="237" width="26" height="23" fill="#333333" shape-rendering="crispEdges"/>
<rect x="568.5" y="251" width="1.6" height="1.6" fill="#e0e0e0" shape-rendering="crispEdges"/>
<rect x="571.5" y="251" width="1.6" height="1.6" fill="#e0e0e0" shape-rendering="crispEdges"/>
<rect x="574.5" y="251" width="1.6" height="1.6" fill="#e0e0e0" shape-rendering="crispEdges"/>
<text x="4" y="278" font-size="13" fill="#e2e2e2" textLength="27" lengthAdjust="spacingAndGlyphs">Wert:</text>
<rect x="4.8" y="285.8" width="515.6" height="16.6" fill="#1c1c1c" stroke="#c0c0c0" stroke-width="1.8" shape-rendering="crispEdges"/>
<rect x="533" y="289" width="26" height="21" fill="#2f2f2f" stroke="#3a3a3a" stroke-width="1" shape-rendering="crispEdges"/>
<rect x="559" y="289" width="26" height="21" fill="#2f2f2f" stroke="#3a3a3a" stroke-width="1" shape-rendering="crispEdges"/>
<path d="M545.5 304 V295 M542 298.5 L545.5 295 L549 298.5" fill="none" stroke="#e8e8e8" stroke-width="1.3"/>
<path d="M571.5 295 V304 M568 300.5 L571.5 304 L575 300.5" fill="none" stroke="#e8e8e8" stroke-width="1.3"/>
<rect x="3" y="315" width="582" height="665.3" fill="#3d3d3d"/>
<rect x="5.2" y="316" width="578.2" height="663" fill="#313131"/>
<rect x="566" y="316" width="19" height="17.5" fill="#2d2d2d" shape-rendering="crispEdges"/>
<rect x="5" y="316" width="561" height="17.5" fill="#8080fb" shape-rendering="crispEdges"/>
<rect x="5" y="333" width="7" height="339" fill="#8080fb" shape-rendering="crispEdges"/>
<rect x="232" y="572" width="205" height="17" fill="#4b4b4b" shape-rendering="crispEdges"/>
<path d="M17 323 V328 H12 Z" fill="#6060c0"/>
<path d="M25.6 317.6 H40.4 V332.4 H25.6 Z M25.6 321.5 H40.4 M30 317.6 V332.4" fill="none" stroke="#f0f0f0" stroke-width="1.2"/>
<text x="45" y="329.2" font-size="13" fill="#ececff" textLength="117" lengthAdjust="spacingAndGlyphs">12.03.2026-Vorstellung</text>
<path d="M33 340 V345 H28 Z" fill="#585858"/>
<path d="M42.6 346.3 V334.4 H54" fill="none" stroke="#e8e8e8" stroke-width="1.3"/>
<path d="M53.2 338.6 H47 V343.2 H53.2" fill="none" stroke="#e8e8e8" stroke-width="1.3"/>
<path d="M62 338 V348 H68 M62 338 H66 V348 M70 348 V349.5 H76 V338" fill="none" stroke="#f0f0f0" stroke-width="1.3"/>
<circle cx="72" cy="336.5" r="2.2" fill="#1e9de2"/>
<path d="M72 338 V346" fill="none" stroke="#f0f0f0" stroke-width="1.2"/>
<text x="80" y="346.2" font-size="13" fill="#e2e2e2" textLength="59" lengthAdjust="spacingAndGlyphs">AAA Cloud</text>
<path d="M50 357 V362 H45 Z" fill="#585858"/>
<path d="M59.6 363.3 V351.4 H71" fill="none" stroke="#e8e8e8" stroke-width="1.3"/>
<path d="M70.2 355.6 H64 V360.2 H70.2" fill="none" stroke="#e8e8e8" stroke-width="1.3"/>
<path d="M81.4 366 V352 H90.4 V366 Z" fill="none" stroke="#f0f0f0" stroke-width="1.2"/>
<rect x="83.6" y="354" width="1.5" height="1.8" fill="#f0f0f0"/>
<rect x="86.8" y="354" width="1.5" height="1.8" fill="#f0f0f0"/>
<rect x="83.6" y="357.5" width="1.5" height="1.8" fill="#f0f0f0"/>
<rect x="86.8" y="357.5" width="1.5" height="1.8" fill="#f0f0f0"/>
<path d="M84.4 366 V362.5 H87.4 V366" fill="none" stroke="#f0f0f0" stroke-width="1.1"/>
<text x="97" y="363.2" font-size="13" fill="#e2e2e2" textLength="71" lengthAdjust="spacingAndGlyphs">BBB Gebäude</text>
<path d="M67 374 V379 H62 Z" fill="#585858"/>
<path d="M76.6 380.3 V368.4 H88" fill="none" stroke="#e8e8e8" stroke-width="1.3"/>
<path d="M87.2 372.6 H81 V377.2 H87.2" fill="none" stroke="#e8e8e8" stroke-width="1.3"/>
<path d="M95 383 V376 L99 371 V376 L104 371 V376 L108 373 V383 Z" fill="#f4f4f4"/>
<rect x="98" y="378.5" width="2" height="2.2" fill="#303030" shape-rendering="crispEdges"/>
<rect x="103" y="378.5" width="2" height="2.2" fill="#303030" shape-rendering="crispEdges"/>
<text x="114" y="380.2" font-size="13" fill="#e2e2e2" textLength="90" lengthAdjust="spacingAndGlyphs">CCC Gebäudeteil</text>
<path d="M84 391 V396 H79 Z" fill="#585858"/>
<path d="M93.6 397.3 V385.4 H105" fill="none" stroke="#e8e8e8" stroke-width="1.3"/>
<path d="M104.2 389.6 H98 V394.2 H104.2" fill="none" stroke="#e8e8e8" stroke-width="1.3"/>
<path d="M112.6 396 V385.8 H122 M115.5 385.8 V396 M112.6 396 H115.5" fill="none" stroke="#f0f0f0" stroke-width="1.2"/>
<path d="M117.6 388.6 H127.4 V400.4 H117.6 Z M121 388.6 V400.4 M124.3 388.6 V400.4" fill="none" stroke="#f0f0f0" stroke-width="1.2"/>
<text x="131" y="397.2" font-size="13" fill="#e2e2e2" textLength="183" lengthAdjust="spacingAndGlyphs">ASP01 (++ASP01) ASP01 | DEV3000</text>
<path d="M101 408 V413 H96 Z" fill="#585858"/>
<path d="M110.6 414.3 V402.4 H122" fill="none" stroke="#e8e8e8" stroke-width="1.3"/>
<path d="M121.2 406.6 H115 V411.2 H121.2" fill="none" stroke="#e8e8e8" stroke-width="1.3"/>
<rect x="129" y="402" width="6" height="3" fill="#e8c860" shape-rendering="crispEdges"/>
<rect x="135" y="403" width="4" height="3" fill="#8cc8f0" shape-rendering="crispEdges"/>
<path d="M137 406.5 H144.4 V417.4 H133 V412 H137 Z M137 412 H144.4 M140.7 406.5 V417.4 M137 412 V417.4" fill="none" stroke="#f0f0f0" stroke-width="1.1"/>
<rect x="132.5" y="413.5" width="4" height="4" fill="#3aa0e8" shape-rendering="crispEdges"/>
<text x="148" y="414.2" font-size="13" fill="#e2e2e2" textLength="90" lengthAdjust="spacingAndGlyphs">EEE | Montageort</text>
<path d="M118 425 V430 H113 Z" fill="#585858"/>
<path d="M127.6 431.3 V419.4 H139" fill="none" stroke="#e8e8e8" stroke-width="1.3"/>
<path d="M138.2 423.6 H132 V428.2 H138.2" fill="none" stroke="#e8e8e8" stroke-width="1.3"/>
<rect x="146" y="419" width="16" height="16" fill="#f4f0e2" shape-rendering="crispEdges"/>
<rect x="154" y="419" width="8" height="8" fill="#f0a0a0" shape-rendering="crispEdges"/>
<rect x="146" y="427" width="8" height="8" fill="#f4f0c8" shape-rendering="crispEdges"/>
<path d="M151 426 H155 V422.5 L160 427.5 L155 431.5 V429 H151 Z" fill="#3cb83c"/>
<rect x="147" y="432" width="14" height="3" fill="#e8e8d8" shape-rendering="crispEdges"/>
<text x="165" y="431.2" font-size="13" fill="#e2e2e2" textLength="203" lengthAdjust="spacingAndGlyphs">420 (=420) Wärmeversorgungsanlagen</text>
<path d="M135 442 V447 H130 Z" fill="#585858"/>
<path d="M144.6 448.3 V436.4 H156" fill="none" stroke="#e8e8e8" stroke-width="1.3"/>
<path d="M155.2 440.6 H149 V445.2 H155.2" fill="none" stroke="#e8e8e8" stroke-width="1.3"/>
<path d="M164 452 V442 Q164 438 167.5 438 Q171 438 171 442 V452 Z" fill="#f6f6f6"/>
<path d="M174 452 V446 Q176.5 443 179 446 V452 Z" fill="#f6f6f6"/>
<path d="M171.5 437 H177 V445 L174 442 L171.5 445 Z" fill="#36b040"/>
<rect x="171" y="445" width="3" height="5" fill="#2a90e0" shape-rendering="crispEdges"/>
<text x="182" y="448.2" font-size="13" fill="#e2e2e2" textLength="170" lengthAdjust="spacingAndGlyphs">VTA01 (=VTA01) Verteilanlage | 1</text>
<path d="M152 459 V464 H147 Z" fill="#585858"/>
<path d="M161.6 465.3 V453.4 H173" fill="none" stroke="#e8e8e8" stroke-width="1.3"/>
<path d="M172.2 457.6 H166 V462.2 H172.2" fill="none" stroke="#e8e8e8" stroke-width="1.3"/>
<path d="M182 462 V457 Q185 454 188 457 V462" fill="none" stroke="#f4f4f4" stroke-width="2"/>
<path d="M188 455 L194 461 L191 461 V467 H189 V459 Z" fill="#36b040"/>
<path d="M181 465 H188 M186 463 L188.5 465 L186 467.5" fill="none" stroke="#2a90e0" stroke-width="1.6"/>
<line x1="195.5" y1="453" x2="195.5" y2="470" stroke="#cfcfcf" stroke-width="1" shape-rendering="crispEdges"/>
<text x="199" y="465.2" font-size="13" fill="#e2e2e2" textLength="85" lengthAdjust="spacingAndGlyphs">HZK01 Heizkreis</text>
<path d="M169 476 V481 H164 Z" fill="#585858"/>
<path d="M178.6 482.3 V470.4 H190" fill="none" stroke="#e8e8e8" stroke-width="1.3"/>
<path d="M189.2 474.6 H183 V479.2 H189.2" fill="none" stroke="#e8e8e8" stroke-width="1.3"/>
<rect x="197" y="470" width="16" height="16" fill="#fbfbfb" shape-rendering="crispEdges"/>
<path d="M198.5 476 H205 M198.5 479.5 H204" fill="none" stroke="#f0c040" stroke-width="1.6"/>
<path d="M204.5 471.5 L211.5 477 L209 479 L205.5 484.5 L200.5 480.5 L203 479.5 L205 481 L207 477.5 L204 475 Z" fill="#44b848"/>
<text x="216" y="482.2" font-size="13" fill="#e2e2e2" textLength="80" lengthAdjust="spacingAndGlyphs">AU~ Außenluft</text>
<path d="M181 490.5 L185.5 494.5 L181 498.5 Z" fill="none" stroke="#474747" stroke-width="1"/>
<rect x="196.5" y="486.5" width="16" height="16" fill="#1d3c44" shape-rendering="crispEdges"/>
<rect x="197" y="487" width="15" height="15" fill="none" stroke="#5a8088" stroke-width="1" shape-rendering="crispEdges"/>
<circle cx="202.8" cy="492.7" r="2.9" fill="#d82828"/>
<circle cx="202.8" cy="492.7" r="1.3" fill="#fff"/>
<rect x="202.8" y="500" width="1.7" height="2" fill="#f4f4f4" shape-rendering="crispEdges"/>
<rect x="205.3" y="498" width="1.7" height="4" fill="#f4f4f4" shape-rendering="crispEdges"/>
<rect x="207.8" y="496" width="1.7" height="6" fill="#f4f4f4" shape-rendering="crispEdges"/>
<rect x="210.3" y="494" width="1.7" height="8" fill="#f4f4f4" shape-rendering="crispEdges"/>
<rect x="214" y="486.5" width="16" height="16" fill="#fbfbfb" shape-rendering="crispEdges"/>
<path d="M221 487.5 L228.5 492.5 L223 495.0 Z" fill="#48b44c"/>
<rect x="220.6" y="488.5" width="1.8" height="9" fill="#3a9a3e" shape-rendering="crispEdges"/>
<circle cx="221" cy="498.5" r="3.2" fill="#4a9ad8"/>
<text x="233" y="499.2" font-size="13" fill="#e2e2e2" textLength="268" lengthAdjust="spacingAndGlyphs">EF~01 Temperaturfühler | AGG_EF_AU_T_AMEV1 | 1</text>
<path d="M169 510 V515 H164 Z" fill="#585858"/>
<path d="M178.6 516.3 V504.4 H190" fill="none" stroke="#e8e8e8" stroke-width="1.3"/>
<path d="M189.2 508.6 H183 V513.2 H189.2" fill="none" stroke="#e8e8e8" stroke-width="1.3"/>
<rect x="197" y="504" width="16" height="16" fill="#fbfbfb" shape-rendering="crispEdges"/>
<path d="M198.5 510 H205 M198.5 513.5 H204" fill="none" stroke="#f0c040" stroke-width="1.6"/>
<path d="M204.5 505.5 L211.5 511 L209 513 L205.5 518.5 L200.5 514.5 L203 513.5 L205 515 L207 511.5 L204 509 Z" fill="#44b848"/>
<text x="216" y="516.2" font-size="13" fill="#e2e2e2" textLength="135" lengthAdjust="spacingAndGlyphs">HZR Heizwasser-Rücklauf</text>
<path d="M181 524.5 L185.5 528.5 L181 532.5 Z" fill="none" stroke="#474747" stroke-width="1"/>
<rect x="196.5" y="520.5" width="16" height="16" fill="#1d3c44" shape-rendering="crispEdges"/>
<rect x="197" y="521" width="15" height="15" fill="none" stroke="#5a8088" stroke-width="1" shape-rendering="crispEdges"/>
<circle cx="202.8" cy="526.7" r="2.9" fill="#d82828"/>
<circle cx="202.8" cy="526.7" r="1.3" fill="#fff"/>
<rect x="202.8" y="534" width="1.7" height="2" fill="#f4f4f4" shape-rendering="crispEdges"/>
<rect x="205.3" y="532" width="1.7" height="4" fill="#f4f4f4" shape-rendering="crispEdges"/>
<rect x="207.8" y="530" width="1.7" height="6" fill="#f4f4f4" shape-rendering="crispEdges"/>
<rect x="210.3" y="528" width="1.7" height="8" fill="#f4f4f4" shape-rendering="crispEdges"/>
<rect x="214" y="520.5" width="16" height="16" fill="#fbfbfb" shape-rendering="crispEdges"/>
<path d="M221 521.5 L228.5 526.5 L223 529.0 Z" fill="#48b44c"/>
<rect x="220.6" y="522.5" width="1.8" height="9" fill="#3a9a3e" shape-rendering="crispEdges"/>
<circle cx="221" cy="532.5" r="3.2" fill="#4a9ad8"/>
<text x="233" y="533.2" font-size="13" fill="#e2e2e2" textLength="247" lengthAdjust="spacingAndGlyphs">EF~01 Temperaturfühler | AGG_EF_T_AMEV1 | 1</text>
<path d="M169 544 V549 H164 Z" fill="#585858"/>
<path d="M178.6 550.3 V538.4 H190" fill="none" stroke="#e8e8e8" stroke-width="1.3"/>
<path d="M189.2 542.6 H183 V547.2 H189.2" fill="none" stroke="#e8e8e8" stroke-width="1.3"/>
<rect x="197" y="538" width="16" height="16" fill="#fbfbfb" shape-rendering="crispEdges"/>
<path d="M198.5 544 H205 M198.5 547.5 H204" fill="none" stroke="#f0c040" stroke-width="1.6"/>
<path d="M204.5 539.5 L211.5 545 L209 547 L205.5 552.5 L200.5 548.5 L203 547.5 L205 549 L207 545.5 L204 543 Z" fill="#44b848"/>
<text x="216" y="550.2" font-size="13" fill="#e2e2e2" textLength="126" lengthAdjust="spacingAndGlyphs">HZV Heizwasser-Vorlauf</text>
<path d="M181 558.5 L185.5 562.5 L181 566.5 Z" fill="none" stroke="#474747" stroke-width="1"/>
<rect x="196.5" y="554.5" width="16" height="16" fill="#1d3c44" shape-rendering="crispEdges"/>
<rect x="197" y="555" width="15" height="15" fill="none" stroke="#5a8088" stroke-width="1" shape-rendering="crispEdges"/>
<circle cx="202.8" cy="560.7" r="2.9" fill="#d82828"/>
<circle cx="202.8" cy="560.7" r="1.3" fill="#fff"/>
<rect x="202.8" y="568" width="1.7" height="2" fill="#f4f4f4" shape-rendering="crispEdges"/>
<rect x="205.3" y="566" width="1.7" height="4" fill="#f4f4f4" shape-rendering="crispEdges"/>
<rect x="207.8" y="564" width="1.7" height="6" fill="#f4f4f4" shape-rendering="crispEdges"/>
<rect x="210.3" y="562" width="1.7" height="8" fill="#f4f4f4" shape-rendering="crispEdges"/>
<rect x="214" y="554.5" width="16" height="16" fill="#fbfbfb" shape-rendering="crispEdges"/>
<path d="M221 555.5 L228.5 560.5 L223 563.0 Z" fill="#48b44c"/>
<rect x="220.6" y="556.5" width="1.8" height="9" fill="#3a9a3e" shape-rendering="crispEdges"/>
<circle cx="221" cy="566.5" r="3.2" fill="#4a9ad8"/>
<text x="233" y="567.2" font-size="13" fill="#e2e2e2" textLength="247" lengthAdjust="spacingAndGlyphs">EF~01 Temperaturfühler | AGG_EF_T_AMEV1 | 3</text>
<path d="M181 575.5 L185.5 579.5 L181 583.5 Z" fill="none" stroke="#474747" stroke-width="1"/>
<rect x="196.5" y="571.5" width="16" height="16" fill="#1d3c44" shape-rendering="crispEdges"/>
<rect x="197" y="572" width="15" height="15" fill="none" stroke="#5a8088" stroke-width="1" shape-rendering="crispEdges"/>
<circle cx="202.8" cy="577.7" r="2.9" fill="#d82828"/>
<circle cx="202.8" cy="577.7" r="1.3" fill="#fff"/>
<rect x="202.8" y="585" width="1.7" height="2" fill="#f4f4f4" shape-rendering="crispEdges"/>
<rect x="205.3" y="583" width="1.7" height="4" fill="#f4f4f4" shape-rendering="crispEdges"/>
<rect x="207.8" y="581" width="1.7" height="6" fill="#f4f4f4" shape-rendering="crispEdges"/>
<rect x="210.3" y="579" width="1.7" height="8" fill="#f4f4f4" shape-rendering="crispEdges"/>
<rect x="214" y="571.5" width="16" height="16" fill="#fbfbfb" shape-rendering="crispEdges"/>
<circle cx="222" cy="580" r="6.8" fill="#a8a8a8" stroke="#6c6c6c" stroke-width="1.2"/>
<path d="M220 573.5 L227.5 575.5 L223 579.5 Z" fill="#48b44c"/>
<path d="M216 584.0 H228" fill="none" stroke="#e8e8e8" stroke-width="1.2"/>
<text x="233" y="584.2" font-size="13" fill="#e2e2e2" textLength="205" lengthAdjust="spacingAndGlyphs">PPE01 Pumpe | AGG_PPE_E1_AMEV1 | 1</text>
<path d="M181 592.5 L185.5 596.5 L181 600.5 Z" fill="none" stroke="#474747" stroke-width="1"/>
<rect x="196.5" y="588.5" width="16" height="16" fill="#1d3c44" shape-rendering="crispEdges"/>
<rect x="197" y="589" width="15" height="15" fill="none" stroke="#5a8088" stroke-width="1" shape-rendering="crispEdges"/>
<circle cx="202.8" cy="594.7" r="2.9" fill="#d82828"/>
<circle cx="202.8" cy="594.7" r="1.3" fill="#fff"/>
<rect x="202.8" y="602" width="1.7" height="2" fill="#f4f4f4" shape-rendering="crispEdges"/>
<rect x="205.3" y="600" width="1.7" height="4" fill="#f4f4f4" shape-rendering="crispEdges"/>
<rect x="207.8" y="598" width="1.7" height="6" fill="#f4f4f4" shape-rendering="crispEdges"/>
<rect x="210.3" y="596" width="1.7" height="8" fill="#f4f4f4" shape-rendering="crispEdges"/>
<rect x="214" y="588.5" width="16" height="16" fill="#fbfbfb" shape-rendering="crispEdges"/>
<circle cx="220" cy="593" r="3" fill="#2838d8"/>
<path d="M222 589.5 L228.5 593.5 L224 596.5 Z" fill="#48b44c"/>
<path d="M216.5 598.0 L220 600.5 L216.5 603.0 Z M223.5 598.0 L220 600.5 L223.5 603.0 Z" fill="#303030"/>
<rect x="219.3" y="595.5" width="1.4" height="5" fill="#303030" shape-rendering="crispEdges"/>
<text x="233" y="601.2" font-size="13" fill="#e2e2e2" textLength="202" lengthAdjust="spacingAndGlyphs">VEN01 Ventil | AGG_VEN_ST_AMEV1 | 5</text>
<path d="M169 612 V617 H164 Z" fill="#585858"/>
<path d="M178.6 618.3 V606.4 H190" fill="none" stroke="#e8e8e8" stroke-width="1.3"/>
<path d="M189.2 610.6 H183 V615.2 H189.2" fill="none" stroke="#e8e8e8" stroke-width="1.3"/>
<rect x="197" y="606" width="16" height="16" fill="#fbfbfb" shape-rendering="crispEdges"/>
<path d="M198.5 612 H205 M198.5 615.5 H204" fill="none" stroke="#f0c040" stroke-width="1.6"/>
<path d="M204.5 607.5 L211.5 613 L209 615 L205.5 620.5 L200.5 616.5 L203 615.5 L205 617 L207 613.5 L204 611 Z" fill="#44b848"/>
<text x="216" y="618.2" font-size="13" fill="#e2e2e2" textLength="85" lengthAdjust="spacingAndGlyphs">HZ~ Heizwasser</text>
<path d="M181 626.5 L185.5 630.5 L181 634.5 Z" fill="none" stroke="#474747" stroke-width="1"/>
<path d="M198.6 635.3 V623.4 H210" fill="none" stroke="#e8e8e8" stroke-width="1.3"/>
<path d="M209.2 627.6 H203 V632.2 H209.2" fill="none" stroke="#e8e8e8" stroke-width="1.3"/>
<rect x="214" y="622.5" width="16" height="16" fill="#fbfbfb" shape-rendering="crispEdges"/>
<path d="M215 628.5 C217 623.5 220 623.5 222 630.5 C224 637.5 227 637.5 229 631.5" fill="none" stroke="#f0a060" stroke-width="2.4"/>
<path d="M221.5 623.5 L228.5 628.0 L223.5 631.0 Z" fill="#48b44c"/>
<text x="233" y="635.2" font-size="13" fill="#e2e2e2" textLength="191" lengthAdjust="spacingAndGlyphs">KRE01 Vorlauftemperatur Regler |  | 6</text>
<path d="M181 643.5 L185.5 647.5 L181 651.5 Z" fill="none" stroke="#474747" stroke-width="1"/>
<path d="M198.6 652.3 V640.4 H210" fill="none" stroke="#e8e8e8" stroke-width="1.3"/>
<path d="M209.2 644.6 H203 V649.2 H209.2" fill="none" stroke="#e8e8e8" stroke-width="1.3"/>
<rect x="214" y="639.5" width="16" height="16" fill="#fbfbfb" shape-rendering="crispEdges"/>
<path d="M215 645.5 C217 640.5 220 640.5 222 647.5 C224 654.5 227 654.5 229 648.5" fill="none" stroke="#f0a060" stroke-width="2.4"/>
<path d="M221.5 640.5 L228.5 645.0 L223.5 648.0 Z" fill="#48b44c"/>
<text x="233" y="652.2" font-size="13" fill="#e2e2e2" textLength="185" lengthAdjust="spacingAndGlyphs">SKL01 Heizkennlinie berechnet |  | 7</text>
<path d="M181 660.5 L185.5 664.5 L181 668.5 Z" fill="none" stroke="#474747" stroke-width="1"/>
<rect x="196.5" y="656.5" width="16" height="16" fill="#1d3c44" shape-rendering="crispEdges"/>
<rect x="197" y="657" width="15" height="15" fill="none" stroke="#5a8088" stroke-width="1" shape-rendering="crispEdges"/>
<circle cx="202.8" cy="662.7" r="2.9" fill="#d82828"/>
<circle cx="202.8" cy="662.7" r="1.3" fill="#fff"/>
<rect x="202.8" y="670" width="1.7" height="2" fill="#f4f4f4" shape-rendering="crispEdges"/>
<rect x="205.3" y="668" width="1.7" height="4" fill="#f4f4f4" shape-rendering="crispEdges"/>
<rect x="207.8" y="666" width="1.7" height="6" fill="#f4f4f4" shape-rendering="crispEdges"/>
<rect x="210.3" y="664" width="1.7" height="8" fill="#f4f4f4" shape-rendering="crispEdges"/>
<rect x="214" y="656.5" width="16" height="16" fill="#fbfbfb" shape-rendering="crispEdges"/>
<circle cx="221.5" cy="665.5" r="5.5" fill="none" stroke="#303030" stroke-width="1.2"/>
<path d="M221 657.5 L228.5 661.5 L223.5 664.5 Z" fill="#48b44c"/>
<text x="218.5" y="668.5" font-size="7" fill="#303030">Σ</text>
<text x="233" y="669.2" font-size="13" fill="#e2e2e2" textLength="296" lengthAdjust="spacingAndGlyphs">WMZ01 Wärmemengenzähler | AGG_WMZ_H_AMEV1 | 1</text>
<rect x="0.5" y="983.5" width="42" height="24" fill="#333333" stroke="#4a4a4a" stroke-width="1" shape-rendering="crispEdges"/>
<text x="6" y="999" font-size="13" fill="#e2e2e2" textLength="31" lengthAdjust="spacingAndGlyphs">Baum</text>
<text x="50" y="999" font-size="13" fill="#e2e2e2" textLength="24" lengthAdjust="spacingAndGlyphs">Liste</text>
<rect x="594.6" y="161" width="1294.9" height="31" fill="#232323" shape-rendering="crispEdges"/>
<rect x="795" y="187" width="1093" height="1.6" fill="#2c2c2c" shape-rendering="crispEdges"/>
<rect x="597.5" y="163.5" width="197" height="27" fill="#222222" stroke="#8080f6" stroke-width="1" shape-rendering="crispEdges"/>
<rect x="597" y="186.7" width="198" height="3.8" fill="#1e9de2" shape-rendering="crispEdges"/>
<text x="603" y="179" font-size="13" fill="#27a3e8" textLength="161" lengthAdjust="spacingAndGlyphs" font-weight="bold">=420.VTA01++ASP01&amp;EFB/1</text>
<path d="M780.5 170.5 L788 178.5 M788 170.5 L780.5 178.5" fill="none" stroke="#e8e8e8" stroke-width="1.8"/>
<rect x="1869" y="167" width="14" height="14" fill="#3a3a3a" shape-rendering="crispEdges"/>
<path d="M1872.5 172.5 H1879.5 L1876 176.5 Z" fill="#8c8c8c"/>
<line x1="1872.5" y1="171" x2="1879.5" y2="171" stroke="#8c8c8c" stroke-width="1"/>
<rect x="594" y="192" width="1295.5" height="816" fill="#8080f6" shape-rendering="crispEdges"/>
<rect x="597.8" y="195" width="1257.7" height="786.2" fill="#7c7c7c" shape-rendering="crispEdges"/>
<rect x="599.6" y="196.7" width="1255.4" height="784.5" fill="#ffffff" shape-rendering="crispEdges"/>
<rect x="1855" y="195" width="31" height="786.2" fill="#383838" shape-rendering="crispEdges"/>
<line x1="1883" y1="195" x2="1883" y2="981" stroke="#2c2c2c" stroke-width="1"/>
<rect x="1880.5" y="195" width="4" height="91" fill="#4c4c4c" shape-rendering="crispEdges"/>
<text x="1862.5" y="199.5" font-size="13" fill="#e6e6e6" textLength="86" lengthAdjust="spacingAndGlyphs" transform="rotate(90 1862.5 199.5)">Einfügezentrum</text>
<line x1="599" y1="209.1" x2="1705" y2="209.1" stroke="#1c1c1c" stroke-width="1.5"/>
<line x1="709.6" y1="197" x2="709.6" y2="209" stroke="#1c1c1c" stroke-width="1.4"/>
<line x1="820.2" y1="197" x2="820.2" y2="209" stroke="#1c1c1c" stroke-width="1.4"/>
<line x1="930.8" y1="197" x2="930.8" y2="209" stroke="#1c1c1c" stroke-width="1.4"/>
<line x1="1041.4" y1="197" x2="1041.4" y2="209" stroke="#1c1c1c" stroke-width="1.4"/>
<line x1="1152" y1="197" x2="1152" y2="209" stroke="#1c1c1c" stroke-width="1.4"/>
<line x1="1262.6" y1="197" x2="1262.6" y2="209" stroke="#1c1c1c" stroke-width="1.4"/>
<line x1="1373.2" y1="197" x2="1373.2" y2="209" stroke="#1c1c1c" stroke-width="1.4"/>
<line x1="1483.8" y1="197" x2="1483.8" y2="209" stroke="#1c1c1c" stroke-width="1.4"/>
<line x1="1594.4" y1="197" x2="1594.4" y2="209" stroke="#1c1c1c" stroke-width="1.4"/>
<text x="654.3" y="205.2" font-size="8" fill="#3a3ac8" font-weight="bold" text-anchor="middle">0</text>
<text x="764.9" y="205.2" font-size="8" fill="#3a3ac8" font-weight="bold" text-anchor="middle">1</text>
<text x="875.5" y="205.2" font-size="8" fill="#3a3ac8" font-weight="bold" text-anchor="middle">2</text>
<text x="986.1" y="205.2" font-size="8" fill="#3a3ac8" font-weight="bold" text-anchor="middle">3</text>
<text x="1096.7" y="205.2" font-size="8" fill="#3a3ac8" font-weight="bold" text-anchor="middle">4</text>
<text x="1207.3" y="205.2" font-size="8" fill="#3a3ac8" font-weight="bold" text-anchor="middle">5</text>
<text x="1317.9" y="205.2" font-size="8" fill="#3a3ac8" font-weight="bold" text-anchor="middle">6</text>
<text x="1428.5" y="205.2" font-size="8" fill="#3a3ac8" font-weight="bold" text-anchor="middle">7</text>
<text x="1539.1" y="205.2" font-size="8" fill="#3a3ac8" font-weight="bold" text-anchor="middle">8</text>
<text x="1649.7" y="205.2" font-size="8" fill="#3a3ac8" font-weight="bold" text-anchor="middle">9</text>
<line x1="1705" y1="196" x2="1705" y2="978" stroke="#1c1c1c" stroke-width="1.3"/>
<line x1="609.7" y1="208.5" x2="609.7" y2="915.5" stroke="#1c1c1c" stroke-width="1.4"/>
<line x1="599" y1="290.7" x2="1705" y2="290.7" stroke="#1c1c1c" stroke-width="1.3"/>
<line x1="609.7" y1="638.3" x2="1705" y2="638.3" stroke="#1c1c1c" stroke-width="1.3"/>
<line x1="609.7" y1="846" x2="1705" y2="846" stroke="#1c1c1c" stroke-width="1.3"/>
<line x1="609.7" y1="722.7" x2="1705" y2="722.7" stroke="#1c1c1c" stroke-width="1.1"/>
<line x1="609.7" y1="730.5" x2="1705" y2="730.5" stroke="#1c1c1c" stroke-width="1.1"/>
<line x1="609.7" y1="738.2" x2="1705" y2="738.2" stroke="#1c1c1c" stroke-width="1.1"/>
<line x1="609.7" y1="746.4" x2="1705" y2="746.4" stroke="#1c1c1c" stroke-width="1.1"/>
<line x1="609.7" y1="754.2" x2="1705" y2="754.2" stroke="#1c1c1c" stroke-width="1.1"/>
<line x1="609.7" y1="760.4" x2="1705" y2="760.4" stroke="#1c1c1c" stroke-width="1.1"/>
<line x1="609.7" y1="762.9" x2="1705" y2="762.9" stroke="#1c1c1c" stroke-width="1.1"/>
<line x1="609.7" y1="835.7" x2="1705" y2="835.7" stroke="#1c1c1c" stroke-width="1.1"/>
<text x="607.3" y="275" font-size="5.2" fill="#333" textLength="36.5" lengthAdjust="spacingAndGlyphs" transform="rotate(-90 607.3 275)">GA Kennlinien</text>
<text x="607.3" y="458" font-size="5.2" fill="#333" textLength="34" lengthAdjust="spacingAndGlyphs" transform="rotate(-90 607.3 458)">Anlagenschema</text>
<text x="607.6" y="839.5" font-size="5.6" fill="#222" textLength="110" lengthAdjust="spacingAndGlyphs" transform="rotate(-90 607.6 839.5)" font-style="italic">*Komplexe Objekte werden nicht aufgeführt.</text>
<text x="607.3" y="910" font-size="5.4" fill="#333" textLength="60.5" lengthAdjust="spacingAndGlyphs" transform="rotate(-90 607.3 910)">GA Funktionsstruktur</text>
<line x1="614.8" y1="638" x2="614.8" y2="846" stroke="#1c1c1c" stroke-width="1.1"/>
<line x1="622.2" y1="638" x2="622.2" y2="846" stroke="#1c1c1c" stroke-width="1.1"/>
<text x="619.4" y="720" font-size="2.6" fill="#444" textLength="40" lengthAdjust="spacingAndGlyphs" transform="rotate(-90 619.4 720)">Normierte Kennzeichnung</text>
<text x="619.4" y="830" font-size="2.6" fill="#444" textLength="40" lengthAdjust="spacingAndGlyphs" transform="rotate(-90 619.4 830)">Normierte Kennzeichnung</text>
<text x="613.2" y="830" font-size="2.6" fill="#444" textLength="13" lengthAdjust="spacingAndGlyphs" transform="rotate(-90 613.2 830)">Kennzeichen</text>
<text x="613.2" y="752" font-size="2.6" fill="#444" textLength="22" lengthAdjust="spacingAndGlyphs" transform="rotate(-90 613.2 752)">Funktionen</text>
<text x="613.2" y="720" font-size="2.6" fill="#444" textLength="5" lengthAdjust="spacingAndGlyphs" transform="rotate(-90 613.2 720)">Ref</text>
<text x="617.6" y="728.2" font-size="2.8" fill="#333">E</text>
<text x="617.6" y="736.2" font-size="2.8" fill="#333">F</text>
<text x="617.6" y="744.2" font-size="2.8" fill="#333">G</text>
<text x="617.6" y="752.2" font-size="2.8" fill="#333">H</text>
<text x="617.6" y="759.2" font-size="2.8" fill="#333">I</text>
<text x="611" y="842.5" font-size="2.8" fill="#333">Ref</text>
<rect x="704.2" y="639.4" width="5.2" height="81" fill="#c6c6c6"/>
<rect x="722.5" y="639.4" width="5.9" height="81" fill="#c6c6c6"/>
<rect x="740.6" y="639.4" width="5.9" height="81" fill="#c6c6c6"/>
<rect x="759.2" y="639.4" width="5.9" height="81" fill="#c6c6c6"/>
<rect x="767.3" y="639.4" width="6" height="81" fill="#c6c6c6"/>
<rect x="774.8" y="639.4" width="6.2" height="81" fill="#c6c6c6"/>
<rect x="793.8" y="639.4" width="5.5" height="81" fill="#c6c6c6"/>
<rect x="801.5" y="639.4" width="5.9" height="81" fill="#c6c6c6"/>
<rect x="820.1" y="639.4" width="5.9" height="81" fill="#c6c6c6"/>
<rect x="828.2" y="639.4" width="6" height="81" fill="#c6c6c6"/>
<rect x="836.4" y="639.4" width="5.2" height="81" fill="#c6c6c6"/>
<rect x="843.8" y="639.4" width="6" height="81" fill="#c6c6c6"/>
<rect x="851.7" y="639.4" width="6" height="81" fill="#c6c6c6"/>
<line x1="766.2" y1="638.3" x2="766.2" y2="846" stroke="#111" stroke-width="1.5"/>
<line x1="774.05" y1="638.3" x2="774.05" y2="846" stroke="#111" stroke-width="1.5"/>
<line x1="800.4" y1="638.3" x2="800.4" y2="846" stroke="#111" stroke-width="1.5"/>
<line x1="827.1" y1="638.3" x2="827.1" y2="846" stroke="#111" stroke-width="1.5"/>
<line x1="835.3" y1="638.3" x2="835.3" y2="846" stroke="#111" stroke-width="1.5"/>
<line x1="842.7" y1="638.3" x2="842.7" y2="846" stroke="#111" stroke-width="1.5"/>
<line x1="850.75" y1="638.3" x2="850.75" y2="846" stroke="#111" stroke-width="1.5"/>
<line x1="858.6" y1="638.3" x2="858.6" y2="846" stroke="#111" stroke-width="1.5"/>
<rect x="859.5" y="638.5" width="2.2" height="207.5" fill="#d2d2d2" stroke="#222" stroke-width="1"/>
<path d="M692.3 846 V641 Q692.3 637.5 697.3 637.5 Q702.3 637.5 702.3 641 V846 Z" fill="#dcdcdc" stroke="#1c1c1c" stroke-width="1.1"/>
<path d="M710.7 846 V641 Q710.7 637.5 715.7 637.5 Q720.7 637.5 720.7 641 V846 Z" fill="#dcdcdc" stroke="#1c1c1c" stroke-width="1.1"/>
<path d="M729.3 846 V641 Q729.3 637.5 734.3 637.5 Q739.3 637.5 739.3 641 V846 Z" fill="#dcdcdc" stroke="#1c1c1c" stroke-width="1.1"/>
<path d="M747.7 846 V641 Q747.7 637.5 752.7 637.5 Q757.7 637.5 757.7 641 V846 Z" fill="#dcdcdc" stroke="#1c1c1c" stroke-width="1.1"/>
<path d="M782.3 846 V641 Q782.3 637.5 787.3 637.5 Q792.3 637.5 792.3 641 V846 Z" fill="#dcdcdc" stroke="#1c1c1c" stroke-width="1.1"/>
<path d="M808.3 846 V641 Q808.3 637.5 813.3 637.5 Q818.3 637.5 818.3 641 V846 Z" fill="#dcdcdc" stroke="#1c1c1c" stroke-width="1.1"/>
<text x="698.9" y="832" font-size="4.4" fill="#111" textLength="36" lengthAdjust="spacingAndGlyphs" font-weight="bold" transform="rotate(-90 698.9 832)">Temperaturfühler</text>
<text x="698.5" y="720" font-size="2.9" fill="#222" textLength="80" lengthAdjust="spacingAndGlyphs" font-weight="bold" transform="rotate(-90 698.5 720)">HZ_BEL_SUPPL_BEL_HZ_FTBL_SMBL_HZ_NI</text>
<text x="697.3" y="843.5" font-size="3" fill="#c0c0c0" text-anchor="middle">1</text>
<text x="717.3" y="832" font-size="4.4" fill="#111" textLength="36" lengthAdjust="spacingAndGlyphs" font-weight="bold" transform="rotate(-90 717.3 832)">Temperaturfühler</text>
<text x="716.9" y="720" font-size="2.9" fill="#222" textLength="80" lengthAdjust="spacingAndGlyphs" font-weight="bold" transform="rotate(-90 716.9 720)">HZ_BEL_SUPPL_BEL_HZ_FTBL_SMBL_HZ_NI</text>
<text x="715.7" y="843.5" font-size="3" fill="#c0c0c0" text-anchor="middle">1</text>
<text x="735.9" y="832" font-size="4.4" fill="#111" textLength="36" lengthAdjust="spacingAndGlyphs" font-weight="bold" transform="rotate(-90 735.9 832)">Temperaturfühler</text>
<text x="735.5" y="720" font-size="2.9" fill="#222" textLength="80" lengthAdjust="spacingAndGlyphs" font-weight="bold" transform="rotate(-90 735.5 720)">HZ_BEL_SUPPL_BEL_HZ_FTBL_SMBL_HZ_NI</text>
<text x="734.3" y="843.5" font-size="3" fill="#c0c0c0" text-anchor="middle">1</text>
<text x="754.3" y="832" font-size="4.4" fill="#111" textLength="14" lengthAdjust="spacingAndGlyphs" font-weight="bold" transform="rotate(-90 754.3 832)">Pumpe</text>
<text x="753.9" y="720" font-size="2.9" fill="#222" textLength="80" lengthAdjust="spacingAndGlyphs" font-weight="bold" transform="rotate(-90 753.9 720)">HZ_BEL_SUPPL_BEL_HZ_FTBL_SMBL_HZ_NI</text>
<text x="752.7" y="843.5" font-size="3" fill="#c0c0c0" text-anchor="middle">1</text>
<text x="788.9" y="832" font-size="4.4" fill="#111" textLength="11" lengthAdjust="spacingAndGlyphs" font-weight="bold" transform="rotate(-90 788.9 832)">Ventil</text>
<text x="788.5" y="720" font-size="2.9" fill="#222" textLength="80" lengthAdjust="spacingAndGlyphs" font-weight="bold" transform="rotate(-90 788.5 720)">HZ_BEL_SUPPL_BEL_HZ_FTBL_SMBL_HZ_NI</text>
<text x="787.3" y="843.5" font-size="3" fill="#c0c0c0" text-anchor="middle">1</text>
<text x="814.9" y="832" font-size="4.4" fill="#111" textLength="45" lengthAdjust="spacingAndGlyphs" font-weight="bold" transform="rotate(-90 814.9 832)">Wärmemengenzähler</text>
<text x="814.5" y="720" font-size="2.9" fill="#222" textLength="80" lengthAdjust="spacingAndGlyphs" font-weight="bold" transform="rotate(-90 814.5 720)">HZ_BEL_SUPPL_BEL_HZ_FTBL_SMBL_HZ_NI</text>
<text x="813.3" y="843.5" font-size="3" fill="#c0c0c0" text-anchor="middle">1</text>
<text x="707.9" y="832" font-size="3.2" fill="#555" textLength="30" lengthAdjust="spacingAndGlyphs" transform="rotate(-90 707.9 832)">Temperatur Messwert</text>
<text x="706.8" y="843.3" font-size="3" fill="#333" text-anchor="middle">AI</text>
<text x="726.55" y="832" font-size="3.2" fill="#555" textLength="30" lengthAdjust="spacingAndGlyphs" transform="rotate(-90 726.55 832)">Temperatur Messwert</text>
<text x="725.45" y="843.3" font-size="3" fill="#333" text-anchor="middle">AI</text>
<text x="744.65" y="832" font-size="3.2" fill="#555" textLength="30" lengthAdjust="spacingAndGlyphs" transform="rotate(-90 744.65 832)">Temperatur Messwert</text>
<text x="743.55" y="843.3" font-size="3" fill="#333" text-anchor="middle">AI</text>
<text x="763.25" y="832" font-size="3.2" fill="#555" textLength="30" lengthAdjust="spacingAndGlyphs" transform="rotate(-90 763.25 832)">Pumpe Ansteuerbefehl</text>
<text x="762.15" y="843.3" font-size="3" fill="#333" text-anchor="middle">BO</text>
<text x="771.4" y="832" font-size="3.2" fill="#555" textLength="33" lengthAdjust="spacingAndGlyphs" transform="rotate(-90 771.4 832)">Pumpe Betriebsmeldung</text>
<text x="770.3" y="843.3" font-size="3" fill="#333" text-anchor="middle">BI</text>
<text x="779" y="832" font-size="3.2" fill="#555" textLength="29" lengthAdjust="spacingAndGlyphs" transform="rotate(-90 779 832)">Pumpe Störmeldung</text>
<text x="777.9" y="843.3" font-size="3" fill="#333" text-anchor="middle">BI</text>
<text x="797.65" y="832" font-size="3.2" fill="#555" textLength="25" lengthAdjust="spacingAndGlyphs" transform="rotate(-90 797.65 832)">Ventil Stellsignal</text>
<text x="796.55" y="843.3" font-size="3" fill="#333" text-anchor="middle">AO</text>
<text x="805.55" y="832" font-size="3.2" fill="#555" textLength="29" lengthAdjust="spacingAndGlyphs" transform="rotate(-90 805.55 832)">Ventil Rückmeldung</text>
<text x="804.45" y="843.3" font-size="3" fill="#333" text-anchor="middle">AI</text>
<text x="824.15" y="832" font-size="3.2" fill="#555" textLength="30" lengthAdjust="spacingAndGlyphs" transform="rotate(-90 824.15 832)">Zähler Wärmemenge</text>
<text x="823.05" y="843.3" font-size="3" fill="#333" text-anchor="middle">BI</text>
<text x="832.3" y="832" font-size="3.2" fill="#555" textLength="36" lengthAdjust="spacingAndGlyphs" transform="rotate(-90 832.3 832)">Leistung Messwert Wärme</text>
<text x="831.2" y="843.3" font-size="3" fill="#333" text-anchor="middle">AV</text>
<text x="840.1" y="832" font-size="3.2" fill="#555" textLength="24" lengthAdjust="spacingAndGlyphs" transform="rotate(-90 840.1 832)">Menge Messwert</text>
<text x="839" y="843.3" font-size="3" fill="#333" text-anchor="middle">AV</text>
<text x="847.9" y="832" font-size="3.2" fill="#555" textLength="30" lengthAdjust="spacingAndGlyphs" transform="rotate(-90 847.9 832)">Temperatur Messwert</text>
<text x="846.8" y="843.3" font-size="3" fill="#333" text-anchor="middle">AI</text>
<text x="855.8" y="832" font-size="3.2" fill="#555" textLength="30" lengthAdjust="spacingAndGlyphs" transform="rotate(-90 855.8 832)">Temperatur Messwert</text>
<text x="854.7" y="843.3" font-size="3" fill="#333" text-anchor="middle">AI</text>
<rect x="706.2" y="749.7" width="1.2" height="1.2" fill="#555" shape-rendering="crispEdges"/>
<rect x="724.85" y="749.7" width="1.2" height="1.2" fill="#555" shape-rendering="crispEdges"/>
<rect x="742.95" y="749.7" width="1.2" height="1.2" fill="#555" shape-rendering="crispEdges"/>
<rect x="761.55" y="733.7" width="1.2" height="1.2" fill="#555" shape-rendering="crispEdges"/>
<rect x="769.7" y="726" width="1.2" height="1.2" fill="#555" shape-rendering="crispEdges"/>
<rect x="777.3" y="726" width="1.2" height="1.2" fill="#555" shape-rendering="crispEdges"/>
<rect x="795.95" y="749.7" width="1.2" height="1.2" fill="#555" shape-rendering="crispEdges"/>
<rect x="803.85" y="749.7" width="1.2" height="1.2" fill="#555" shape-rendering="crispEdges"/>
<rect x="822.45" y="756.7" width="1.2" height="1.2" fill="#555" shape-rendering="crispEdges"/>
<rect x="830.6" y="756.7" width="1.2" height="1.2" fill="#555" shape-rendering="crispEdges"/>
<rect x="838.4" y="756.7" width="1.2" height="1.2" fill="#555" shape-rendering="crispEdges"/>
<rect x="846.2" y="756.7" width="1.2" height="1.2" fill="#555" shape-rendering="crispEdges"/>
<rect x="854.1" y="756.7" width="1.2" height="1.2" fill="#555" shape-rendering="crispEdges"/>
<rect x="696.6" y="741.7" width="1.4" height="1.4" fill="#333" shape-rendering="crispEdges"/>
<rect x="715" y="741.7" width="1.4" height="1.4" fill="#333" shape-rendering="crispEdges"/>
<rect x="733.6" y="741.7" width="1.4" height="1.4" fill="#333" shape-rendering="crispEdges"/>
<rect x="752" y="726" width="1.4" height="1.4" fill="#333" shape-rendering="crispEdges"/>
<rect x="786.6" y="741.7" width="1.4" height="1.4" fill="#333" shape-rendering="crispEdges"/>
<rect x="812.6" y="749.7" width="1.4" height="1.4" fill="#333" shape-rendering="crispEdges"/>
<rect x="752" y="733" width="1.4" height="1.4" fill="#333" shape-rendering="crispEdges"/>
<rect x="786.6" y="748.6" width="1.4" height="1.4" fill="#333" shape-rendering="crispEdges"/>
<rect x="652" y="299" width="4.6" height="16" fill="#1414e0" shape-rendering="crispEdges"/>
<path d="M646.3 301 V315 M649.7 300 V316" fill="none" stroke="#faf0cc" stroke-width="1.2"/>
<text x="640" y="297" font-size="2.6" fill="#c8d0a0">AI-PT1K</text>
<rect x="626.4" y="318.1" width="40.2" height="26.8" rx="12" ry="13.4" fill="#ffffff" stroke="#2323c4" stroke-width="1.3"/>
<line x1="626.9" y1="331.5" x2="666.1" y2="331.5" stroke="#2323c4" stroke-width="1.3"/>
<text x="646.5" y="327.3" font-size="5.4" fill="#333" text-anchor="middle">TI</text>
<text x="646.5" y="340.1" font-size="5.4" fill="#333" text-anchor="middle">EF~01</text>
<text x="646.5" y="350.8" font-size="3.6" fill="#2323c4" textLength="36" lengthAdjust="spacingAndGlyphs" text-anchor="middle">VTA01:HZK01:AU~</text>
<text x="646.5" y="355.7" font-size="3.6" fill="#2323c4" textLength="12" lengthAdjust="spacingAndGlyphs" text-anchor="middle">-BT1</text>
<rect x="625.1" y="357.8" width="42.8" height="5.6" fill="#fff" stroke="#7a7a7a" stroke-width="1.1" shape-rendering="crispEdges"/>
<text x="646.5" y="361.2" font-size="3" fill="#999" text-anchor="middle">+ASP01.EEE</text>
<rect x="781.6" y="344.2" width="40.2" height="26.8" rx="12" ry="13.4" fill="#ffffff" stroke="#2323c4" stroke-width="1.3"/>
<line x1="782.1" y1="357.5" x2="821.3" y2="357.5" stroke="#2323c4" stroke-width="1.3"/>
<text x="801.7" y="353.4" font-size="5.4" fill="#333" text-anchor="middle">TI</text>
<text x="801.7" y="366.2" font-size="5.4" fill="#333" text-anchor="middle">EF~01</text>
<text x="801.7" y="376.9" font-size="3.6" fill="#2323c4" textLength="36" lengthAdjust="spacingAndGlyphs" text-anchor="middle">VTA01:HZK01:HZV</text>
<text x="801.7" y="381.8" font-size="3.6" fill="#2323c4" textLength="12" lengthAdjust="spacingAndGlyphs" text-anchor="middle">-BT1</text>
<rect x="780.3" y="383.9" width="42.8" height="5.6" fill="#fff" stroke="#7a7a7a" stroke-width="1.1" shape-rendering="crispEdges"/>
<rect x="948.9" y="344.2" width="40.2" height="26.8" rx="12" ry="13.4" fill="#ffffff" stroke="#2323c4" stroke-width="1.3"/>
<line x1="949.4" y1="357.5" x2="988.6" y2="357.5" stroke="#2323c4" stroke-width="1.3"/>
<text x="969" y="353.4" font-size="5.4" fill="#333" text-anchor="middle">TI</text>
<text x="969" y="366.2" font-size="5.4" fill="#333" text-anchor="middle">EF~01</text>
<text x="969" y="376.9" font-size="3.6" fill="#2323c4" textLength="36" lengthAdjust="spacingAndGlyphs" text-anchor="middle">VTA01:HZK01:HZR</text>
<text x="969" y="381.8" font-size="3.6" fill="#2323c4" textLength="12" lengthAdjust="spacingAndGlyphs" text-anchor="middle">-BT1</text>
<rect x="947.6" y="383.9" width="42.8" height="5.6" fill="#fff" stroke="#7a7a7a" stroke-width="1.1" shape-rendering="crispEdges"/>
<circle cx="830.3" cy="357.5" r="3.3" fill="#ffd85a" opacity="0.9"/>
<line x1="833.5" y1="357.5" x2="837" y2="357.5" stroke="#f0e8c0" stroke-width="1"/>
<rect x="838.2" y="359" width="1.6" height="12.8" fill="#cfe4cc" shape-rendering="crispEdges"/>
<circle cx="939.5" cy="357.6" r="3.4" fill="#ffd84a" opacity="0.9"/>
<line x1="931" y1="357.6" x2="936" y2="357.6" stroke="#e8e0b0" stroke-width="1"/>
<rect x="929.4" y="359" width="1.4" height="12.8" fill="#ececec" shape-rendering="crispEdges"/>
<text x="847.9" y="310.6" font-size="5.5" fill="#2a2a2a" textLength="77.2" lengthAdjust="spacingAndGlyphs">** kW | ** m³/h | **°C/**°C</text>
<path d="M865 337.7 H842.6 V428" fill="none" stroke="#e02828" stroke-width="1.3"/>
<line x1="842.6" y1="448" x2="842.6" y2="494" stroke="#d83030" stroke-width="1.1"/>
<line x1="842.8" y1="508" x2="842.8" y2="577" stroke="#d86060" stroke-width="2.4"/>
<rect x="841" y="337" width="2" height="2" fill="#e02828" shape-rendering="crispEdges"/>
<circle cx="884.4" cy="338" r="19.6" fill="#fff" stroke="#2323c4" stroke-width="1.4"/>
<circle cx="884.4" cy="338" r="13.3" fill="none" stroke="#2323c4" stroke-width="1.4"/>
<path d="M904 337.7 H928 V596" fill="none" stroke="#1818c8" stroke-width="2.6"/>
<rect x="925" y="428.3" width="6" height="12.4" fill="#e8f0ff" stroke="#1818c8" stroke-width="1.2" shape-rendering="crispEdges"/>
<line x1="925" y1="434.5" x2="931" y2="434.5" stroke="#1818c8" stroke-width="1"/>
<rect x="897" y="428.8" width="14.3" height="12" fill="#fffef8" stroke="#f8efc4" stroke-width="1.1" shape-rendering="crispEdges"/>
<text x="899.5" y="434" font-size="2.6" fill="#2323c4">WMZ</text>
<text x="899.5" y="438.5" font-size="2.6" fill="#2323c4">-P01</text>
<rect x="770.9" y="424.6" width="40.2" height="26.8" rx="12" ry="13.4" fill="#ffffff" stroke="#2323c4" stroke-width="1.3"/>
<line x1="771.4" y1="438.5" x2="810.6" y2="438.5" stroke="#2323c4" stroke-width="1.3"/>
<text x="791" y="433.8" font-size="5.4" fill="#333" text-anchor="middle">NS</text>
<text x="791" y="446.6" font-size="5.4" fill="#333" text-anchor="middle">PPE01</text>
<text x="791" y="457.3" font-size="3.6" fill="#2323c4" textLength="36" lengthAdjust="spacingAndGlyphs" text-anchor="middle">VTA01:HZK01:HZV</text>
<rect x="769.5" y="464.4" width="43" height="5.8" fill="#fff" stroke="#777" stroke-width="1.2" shape-rendering="crispEdges"/>
<text x="811.5" y="428.5" font-size="2.4" fill="#2323c4">MM</text>
<text x="811.5" y="452" font-size="2.4" fill="#2323c4">AL</text>
<circle cx="825" cy="438.3" r="6" fill="#fffef4" stroke="#f0e4a8" stroke-width="1.2"/>
<text x="825" y="440.4" font-size="5.2" fill="#2323c4" text-anchor="middle">S1</text>
<circle cx="842.6" cy="437.3" r="10" fill="#fff" stroke="#2323c4" stroke-width="1.5"/>
<path d="M833.6 434.6 L842.6 427.6 L851.6 434.6" fill="none" stroke="#2323c4" stroke-width="1.2"/>
<line x1="842.6" y1="428" x2="842.6" y2="447" stroke="#b03030" stroke-width="1"/>
<text x="845.5" y="426" font-size="4.4" fill="#444">1</text>
<text x="845.5" y="456" font-size="4.4" fill="#444">2</text>
<rect x="782.9" y="487.6" width="40.2" height="26.8" rx="12" ry="13.4" fill="#ffffff" stroke="#2323c4" stroke-width="1.3"/>
<line x1="783.4" y1="501.5" x2="822.6" y2="501.5" stroke="#2323c4" stroke-width="1.3"/>
<text x="803" y="496.8" font-size="5.4" fill="#333" text-anchor="middle">YCI</text>
<text x="803" y="509.6" font-size="5.4" fill="#333" text-anchor="middle">VEN01</text>
<text x="803" y="520.3" font-size="3.6" fill="#2323c4" textLength="36" lengthAdjust="spacingAndGlyphs" text-anchor="middle">VTA01:HZK01:HZV</text>
<text x="803" y="525.2" font-size="3.6" fill="#2323c4" textLength="12" lengthAdjust="spacingAndGlyphs" text-anchor="middle">-KH01</text>
<rect x="781.6" y="527.3" width="42.8" height="5.6" fill="#fff" stroke="#7a7a7a" stroke-width="1.1" shape-rendering="crispEdges"/>
<path d="M839 495 H846.2 L842.6 501 Z M839 507.5 H846.2 L842.6 501 Z M849 497.5 V504.5 L842.6 501 Z" fill="#fff" stroke="#2323c4" stroke-width="1.1"/>
<text x="845" y="492.5" font-size="4" fill="#444">1</text>
<text x="851" y="497.5" font-size="4" fill="#444">2</text>
<text x="845" y="515" font-size="4" fill="#444">3</text>
<circle cx="832.7" cy="501" r="3.2" fill="#ffe066" opacity="0.85"/>
<rect x="837.4" y="507" width="1.8" height="14" fill="#e8d8c8" shape-rendering="crispEdges"/>
<line x1="849" y1="501" x2="928" y2="501" stroke="#1818c8" stroke-width="1.6"/>
<circle cx="928" cy="501" r="3" fill="#1818c8"/>
<text x="845.5" y="559.5" font-size="3.4" fill="#2323c4">HZV</text>
<path d="M840.5 565.5 L844.5 561" fill="none" stroke="#333" stroke-width="1.1"/>
<text x="931" y="559.5" font-size="3.4" fill="#2323c4">HZR</text>
<path d="M926 561 L930 565.5" fill="none" stroke="#333" stroke-width="1.1"/>
<line x1="711.5" y1="580.4" x2="1066.5" y2="580.4" stroke="#f41414" stroke-width="7.2" stroke-linecap="round"/>
<line x1="711.5" y1="596.2" x2="1066.5" y2="596.2" stroke="#0a0af0" stroke-width="7.4" stroke-linecap="round"/>
<line x1="700" y1="580.4" x2="708" y2="580.4" stroke="#1c1c1c" stroke-width="1.2"/>
<line x1="1070" y1="580.4" x2="1077" y2="580.4" stroke="#1c1c1c" stroke-width="1.2"/>
<circle cx="697.3" cy="580.4" r="2.8" fill="#fff" stroke="#1c1c1c" stroke-width="1.3"/>
<circle cx="1079.5" cy="580.4" r="2.8" fill="#fff" stroke="#1c1c1c" stroke-width="1.3"/>
<text x="684" y="582" font-size="4.2" fill="#333" textLength="9.5" lengthAdjust="spacingAndGlyphs">HZV</text>
<line x1="700" y1="596.2" x2="708" y2="596.2" stroke="#1c1c1c" stroke-width="1.2"/>
<line x1="1070" y1="596.2" x2="1077" y2="596.2" stroke="#1c1c1c" stroke-width="1.2"/>
<circle cx="697.3" cy="596.2" r="2.8" fill="#fff" stroke="#1c1c1c" stroke-width="1.3"/>
<circle cx="1079.5" cy="596.2" r="2.8" fill="#fff" stroke="#1c1c1c" stroke-width="1.3"/>
<text x="684" y="597.8" font-size="4.2" fill="#333" textLength="9.5" lengthAdjust="spacingAndGlyphs">HZR</text>
<rect x="709" y="875.7" width="35.3" height="9.4" fill="#fff" stroke="#2323c4" stroke-width="1.2" shape-rendering="crispEdges"/>
<text x="710.5" y="883.5" font-size="8.6" fill="#2323c4" textLength="32.5" lengthAdjust="spacingAndGlyphs">HZV_T_A</text>
<line x1="710.5" y1="884.2" x2="743" y2="884.2" stroke="#2323c4" stroke-width="0.8"/>
<text x="685" y="891" font-size="5.2" fill="#333" textLength="84" lengthAdjust="spacingAndGlyphs">Heizkurve mit Raumrückführung</text>
<rect x="706.8" y="896" width="40" height="16.4" fill="#fff" stroke="#2323c4" stroke-width="1.3" shape-rendering="crispEdges"/>
<line x1="706.8" y1="904.2" x2="746.8" y2="904.2" stroke="#2323c4" stroke-width="1.1"/>
<text x="708.5" y="902.6" font-size="5.4" fill="#333" textLength="11" lengthAdjust="spacingAndGlyphs">I_01</text>
<text x="731" y="902.6" font-size="5.4" fill="#333" textLength="14" lengthAdjust="spacingAndGlyphs">O_01</text>
<text x="708.5" y="910.8" font-size="5.4" fill="#333" textLength="11" lengthAdjust="spacingAndGlyphs">I_02</text>
<text x="731" y="910.8" font-size="5.4" fill="#333" textLength="14" lengthAdjust="spacingAndGlyphs">O_02</text>
<circle cx="703.6" cy="900" r="2.6" fill="#fff" stroke="#2323c4" stroke-width="1.2"/>
<circle cx="749.7" cy="900" r="2.3" fill="#fff" stroke="#2323c4" stroke-width="1.2"/>
<circle cx="703.6" cy="908.3" r="2.6" fill="#fff" stroke="#2323c4" stroke-width="1.2"/>
<circle cx="749.7" cy="908.3" r="2.3" fill="#fff" stroke="#2323c4" stroke-width="1.2"/>
<line x1="654.5" y1="900" x2="700.5" y2="900" stroke="#e03030" stroke-width="1.1"/>
<circle cx="651.6" cy="900" r="3" fill="#fff" stroke="#2323c4" stroke-width="1.4"/>
<text x="615" y="902" font-size="5.2" fill="#333" textLength="34" lengthAdjust="spacingAndGlyphs">AU_T_MW:1</text>
<text x="685" y="897.6" font-size="2.8" fill="#2323c4" textLength="14" lengthAdjust="spacingAndGlyphs">AU_T_MW</text>
<text x="687" y="906.6" font-size="2.8" fill="#2323c4" textLength="11" lengthAdjust="spacingAndGlyphs">MW_Ra</text>
<text x="753.5" y="898" font-size="2.8" fill="#2323c4" textLength="17" lengthAdjust="spacingAndGlyphs">MW_T_Vor</text>
<text x="753.5" y="906.6" font-size="2.8" fill="#2323c4" textLength="11" lengthAdjust="spacingAndGlyphs">MW_K</text>
<rect x="802.4" y="867.4" width="30" height="9.4" fill="#fff" stroke="#2323c4" stroke-width="1.2" shape-rendering="crispEdges"/>
<text x="803.9" y="875.2" font-size="8.6" fill="#2323c4" textLength="27.5" lengthAdjust="spacingAndGlyphs">HZV_LP</text>
<line x1="803.9" y1="875.9" x2="831.4" y2="875.9" stroke="#2323c4" stroke-width="0.8"/>
<text x="785" y="883.4" font-size="5.2" fill="#333" textLength="65" lengthAdjust="spacingAndGlyphs">Vorlauftemperatur Regler</text>
<rect x="797.4" y="888.4" width="40.2" height="16" fill="#fff" stroke="#2323c4" stroke-width="1.3" shape-rendering="crispEdges"/>
<line x1="797.4" y1="896.4" x2="837.6" y2="896.4" stroke="#2323c4" stroke-width="1.1"/>
<text x="799" y="894.8" font-size="5.4" fill="#333" textLength="11" lengthAdjust="spacingAndGlyphs">I_01</text>
<text x="822" y="894.8" font-size="5.4" fill="#333" textLength="14" lengthAdjust="spacingAndGlyphs">O_01</text>
<text x="799" y="903" font-size="5.4" fill="#333" textLength="11" lengthAdjust="spacingAndGlyphs">I_02</text>
<circle cx="794.5" cy="892.4" r="2.6" fill="#fff" stroke="#2323c4" stroke-width="1.2"/>
<circle cx="794.5" cy="900.4" r="2.6" fill="#fff" stroke="#2323c4" stroke-width="1.2"/>
<circle cx="840.6" cy="892.2" r="2.3" fill="#fff" stroke="#2323c4" stroke-width="1.2"/>
<line x1="752" y1="900.2" x2="791.6" y2="900.2" stroke="#e03030" stroke-width="1.2"/>
<text x="774" y="890.6" font-size="2.8" fill="#2323c4" textLength="15" lengthAdjust="spacingAndGlyphs">MW_T_Ra</text>
<text x="774" y="898.6" font-size="2.8" fill="#2323c4" textLength="16" lengthAdjust="spacingAndGlyphs">MW_T_Vor</text>
<text x="844" y="890.6" font-size="2.8" fill="#2323c4" textLength="13" lengthAdjust="spacingAndGlyphs">MW_ST</text>
<text x="602" y="924.5" font-size="4.8" fill="#333" textLength="25" lengthAdjust="spacingAndGlyphs">Rückblatt:</text>
<text x="1676" y="924" font-size="4.8" fill="#333" textLength="26" lengthAdjust="spacingAndGlyphs">Folgeblatt</text>
<text x="1683" y="933" font-size="4.8" fill="#2323c4" textLength="19" lengthAdjust="spacingAndGlyphs" font-weight="bold">&amp;EFS/1</text>
<line x1="599" y1="936" x2="1705" y2="936" stroke="#1c1c1c" stroke-width="1.3"/>
<line x1="599" y1="978" x2="1705" y2="978" stroke="#1c1c1c" stroke-width="1.3"/>
<line x1="599" y1="946.2" x2="1373.3" y2="946.2" stroke="#1c1c1c" stroke-width="1.1"/>
<line x1="599" y1="956.6" x2="720" y2="956.6" stroke="#1c1c1c" stroke-width="1"/>
<line x1="909.3" y1="956.6" x2="988.3" y2="956.6" stroke="#1c1c1c" stroke-width="1"/>
<line x1="1546.7" y1="956.6" x2="1705" y2="956.6" stroke="#1c1c1c" stroke-width="1.1"/>
<line x1="599" y1="967.2" x2="720" y2="967.2" stroke="#1c1c1c" stroke-width="1"/>
<line x1="909.3" y1="967.2" x2="988.3" y2="967.2" stroke="#1c1c1c" stroke-width="1"/>
<line x1="1546.7" y1="967.2" x2="1705" y2="967.2" stroke="#1c1c1c" stroke-width="1.1"/>
<line x1="1546.7" y1="946.4" x2="1705" y2="946.4" stroke="#1c1c1c" stroke-width="1.1"/>
<line x1="635" y1="936" x2="635" y2="978" stroke="#1c1c1c" stroke-width="1.1"/>
<line x1="672.3" y1="936" x2="672.3" y2="978" stroke="#1c1c1c" stroke-width="1.1"/>
<line x1="720" y1="936" x2="720" y2="978" stroke="#1c1c1c" stroke-width="1.3"/>
<line x1="988.3" y1="936" x2="988.3" y2="978" stroke="#1c1c1c" stroke-width="1.3"/>
<line x1="1175.7" y1="936" x2="1175.7" y2="978" stroke="#1c1c1c" stroke-width="1.3"/>
<line x1="1373.3" y1="936" x2="1373.3" y2="978" stroke="#1c1c1c" stroke-width="1.3"/>
<line x1="1546.7" y1="936" x2="1546.7" y2="978" stroke="#1c1c1c" stroke-width="1.3"/>
<line x1="909.3" y1="946.2" x2="909.3" y2="978" stroke="#1c1c1c" stroke-width="1.1"/>
<line x1="1625.7" y1="936" x2="1625.7" y2="957" stroke="#1c1c1c" stroke-width="1.1"/>
<line x1="1373.3" y1="946.2" x2="1546.7" y2="946.2" stroke="#1c1c1c" stroke-width="1.1"/>
<text x="601" y="943.6" font-size="7.4" fill="#2a2a2a" textLength="30" lengthAdjust="spacingAndGlyphs">Revision</text>
<text x="638" y="943.6" font-size="7.4" fill="#2a2a2a" textLength="24" lengthAdjust="spacingAndGlyphs">Datum</text>
<text x="675" y="943.6" font-size="7.4" fill="#2a2a2a" textLength="21" lengthAdjust="spacingAndGlyphs">Name</text>
<text x="725" y="943.6" font-size="7.4" fill="#2a2a2a" textLength="31" lengthAdjust="spacingAndGlyphs">Ersteller:</text>
<text x="991" y="943.6" font-size="7.4" fill="#2a2a2a" textLength="65" lengthAdjust="spacingAndGlyphs">Schaltschrankbau:</text>
<text x="1178" y="943.6" font-size="7.4" fill="#2a2a2a" textLength="25" lengthAdjust="spacingAndGlyphs">Kunde:</text>
<path d="M726 963 L731.5 950 L738 963 Z" fill="#d41820"/>
<text x="737.5" y="963.6" font-size="15.5" fill="#555" textLength="35.5" lengthAdjust="spacingAndGlyphs">Delta</text>
<text x="726.5" y="967.8" font-size="2.6" fill="#999" textLength="46" lengthAdjust="spacingAndGlyphs">C O N T R O L S</text>
<text x="726" y="974.6" font-size="3" fill="#444" textLength="46" lengthAdjust="spacingAndGlyphs">Delta Controls Germany</text>
<text x="778" y="953.6" font-size="7.6" fill="#2828c8" textLength="110" lengthAdjust="spacingAndGlyphs">Delta Controls Germany GmbH</text>
<text x="778" y="964.2" font-size="7.6" fill="#2828c8" textLength="52" lengthAdjust="spacingAndGlyphs">Fasanenweg 9</text>
<text x="778" y="974.6" font-size="7.6" fill="#2828c8" textLength="113" lengthAdjust="spacingAndGlyphs">70771  Leinfelden Echterdingen</text>
<text x="912.5" y="953" font-size="4.6" fill="#333" textLength="27" lengthAdjust="spacingAndGlyphs">Projektnr.:</text>
<text x="953.5" y="953" font-size="4.6" fill="#2828c8" textLength="33" lengthAdjust="spacingAndGlyphs">&lt;Projektnr.&gt;</text>
<text x="912.5" y="963.6" font-size="4.6" fill="#333" textLength="27" lengthAdjust="spacingAndGlyphs">Bearbeiter:</text>
<text x="960.5" y="963.6" font-size="4.6" fill="#2828c8" textLength="26" lengthAdjust="spacingAndGlyphs">JRENNING</text>
<text x="912.5" y="974" font-size="4.6" fill="#333" textLength="37" lengthAdjust="spacingAndGlyphs">bearbeitet am:</text>
<text x="957.5" y="974" font-size="4.6" fill="#2828c8" textLength="29" lengthAdjust="spacingAndGlyphs">23.03.2026</text>
<rect x="992" y="950.3" width="43" height="24" fill="#fff" stroke="#e88ca0" stroke-width="1.4" shape-rendering="crispEdges"/>
<text x="1002" y="956" font-size="3" fill="#888">Platzhalter</text>
<text x="1002" y="961.2" font-size="3" fill="#888">Logo</text>
<text x="1002" y="966.4" font-size="3" fill="#888">Kunde</text>
<text x="1041.5" y="964.4" font-size="7.6" fill="#2828c8" textLength="131" lengthAdjust="spacingAndGlyphs">&lt;SSK-Bauer: Straße+Hausnummer&gt;</text>
<text x="1041.5" y="974.6" font-size="7.6" fill="#2828c8" textLength="84" lengthAdjust="spacingAndGlyphs">&lt;SSK-Bauer: PLZ+Ort&gt;</text>
<rect x="1178.6" y="950.3" width="43" height="24" fill="#fff" stroke="#e88ca0" stroke-width="1.4" shape-rendering="crispEdges"/>
<text x="1188" y="956" font-size="3" fill="#888">Platzhalter</text>
<text x="1188" y="961.2" font-size="3" fill="#888">Logo</text>
<text x="1188" y="966.4" font-size="3" fill="#888">Endkunde</text>
<text x="1375.5" y="943.8" font-size="7.8" fill="#2828c8" textLength="51" lengthAdjust="spacingAndGlyphs">Fließschemata</text>
<text x="1378" y="956.4" font-size="7.6" fill="#2828c8" textLength="39" lengthAdjust="spacingAndGlyphs">Heizkreis 1</text>
<text x="1549.8" y="943.9" font-size="4.6" fill="#333" textLength="40" lengthAdjust="spacingAndGlyphs">Aufstellungsort:</text>
<text x="1598" y="943.4" font-size="4.6" fill="#2828c8" textLength="24" lengthAdjust="spacingAndGlyphs">++ASP01</text>
<text x="1628.5" y="943.4" font-size="4.6" fill="#333" textLength="13" lengthAdjust="spacingAndGlyphs">Blatt:</text>
<text x="1699" y="943.4" font-size="4.6" fill="#2828c8">1</text>
<text x="1549.8" y="954.1" font-size="4.6" fill="#333" textLength="41" lengthAdjust="spacingAndGlyphs">Dokumentenart:</text>
<text x="1596.5" y="953.6" font-size="4.6" fill="#2828c8" textLength="14" lengthAdjust="spacingAndGlyphs">&amp;EFB</text>
<text x="1628.5" y="953.6" font-size="4.6" fill="#333" textLength="14" lengthAdjust="spacingAndGlyphs">Seite:</text>
<text x="1660.5" y="953.6" font-size="4.6" fill="#333" textLength="14" lengthAdjust="spacingAndGlyphs">1 von</text>
<text x="1699" y="953.6" font-size="4.6" fill="#2828c8">9</text>
<text x="1549.8" y="964.7" font-size="4.6" fill="#333" textLength="45" lengthAdjust="spacingAndGlyphs">Funktionszeichen:</text>
<text x="1597" y="964.2" font-size="4.6" fill="#2828c8" textLength="32" lengthAdjust="spacingAndGlyphs">=420.VTA01</text>
<text x="1549.8" y="974.9" font-size="4.6" fill="#333" textLength="44" lengthAdjust="spacingAndGlyphs">Ortskennzeichen:</text>
<text x="1598" y="974.4" font-size="4.6" fill="#2828c8">+</text>
<line x1="842.6" y1="196.6" x2="842.6" y2="337" stroke="#4a4a4a" stroke-width="1" shape-rendering="crispEdges"/>
<line x1="842.6" y1="600" x2="842.6" y2="981" stroke="#4a4a4a" stroke-width="1" shape-rendering="crispEdges"/>
<line x1="842.6" y1="576.8" x2="842.6" y2="583.6" stroke="#ff9a6a" stroke-width="1" shape-rendering="crispEdges"/>
<line x1="842.6" y1="592.6" x2="842.6" y2="599.8" stroke="#6a8aff" stroke-width="1" shape-rendering="crispEdges"/>
<line x1="842.6" y1="584" x2="842.6" y2="592.4" stroke="#4a4a4a" stroke-width="1" shape-rendering="crispEdges"/>
<line x1="609.7" y1="427.4" x2="1854" y2="427.4" stroke="#5a5a5a" stroke-width="1" shape-rendering="crispEdges"/>
<rect x="597.8" y="981.2" width="1288.2" height="22.6" fill="#484848" shape-rendering="crispEdges"/>
<text x="606" y="996.6" font-size="13" fill="#e4e4e4" textLength="109" lengthAdjust="spacingAndGlyphs">RX: 185,00 RY: 418,00</text>
<text x="733" y="996.6" font-size="13" fill="#e4e4e4" textLength="286" lengthAdjust="spacingAndGlyphs">Zielposition wählen (Pumpen) (Variante A RI-Fließbild)</text>
<path d="M1528 996 H1540 V999.5 H1528 Z" fill="none" stroke="#f0f0f0" stroke-width="1.3"/>
<path d="M1530 993.5 L1536.5 986 L1539 988.5 L1533 994.5 Z" fill="#1e9de2"/>
<path d="M1550.5 998.5 V992.0 Q1550.5 986.5 1555.5 986.5 Q1560.5 986.5 1560.5 992.0 V998.5" fill="none" stroke="#f0f0f0" stroke-width="3"/>
<rect x="1548" y="996.5" width="3" height="3" fill="#1e9de2" shape-rendering="crispEdges"/>
<rect x="1566" y="982" width="21" height="21" fill="#2a2a2a" shape-rendering="crispEdges"/>
<path d="M1570.0 998.5 V992.0 Q1570.0 986.5 1575.0 986.5 Q1580.0 986.5 1580.0 992.0 V998.5" fill="none" stroke="#f0f0f0" stroke-width="3"/>
<rect x="1583" y="988" width="1.6" height="1.6" fill="#e8e8e8" shape-rendering="crispEdges"/>
<rect x="1583" y="992" width="1.6" height="1.6" fill="#e8e8e8" shape-rendering="crispEdges"/>
<rect x="1583" y="996" width="1.6" height="1.6" fill="#e8e8e8" shape-rendering="crispEdges"/>
<rect x="1570" y="1000" width="1.6" height="1.6" fill="#e8e8e8" shape-rendering="crispEdges"/>
<rect x="1574" y="1000" width="1.6" height="1.6" fill="#e8e8e8" shape-rendering="crispEdges"/>
<rect x="1578" y="1000" width="1.6" height="1.6" fill="#e8e8e8" shape-rendering="crispEdges"/>
<rect x="1589" y="982" width="21" height="21" fill="#525252" shape-rendering="crispEdges"/>
<path d="M1599 985.5 V1000.5 M1591.5 993 H1606.5" fill="none" stroke="#3590cc" stroke-width="1.2"/>
<circle cx="1599" cy="993" r="2" fill="#3590cc"/>
<rect x="1616" y="982" width="35" height="21" fill="#303030" shape-rendering="crispEdges"/>
<rect x="1622" y="986" width="2" height="2" fill="#f0f0f0" shape-rendering="crispEdges"/>
<rect x="1622" y="990.5" width="2" height="2" fill="#f0f0f0" shape-rendering="crispEdges"/>
<rect x="1622" y="995" width="2" height="2" fill="#f0f0f0" shape-rendering="crispEdges"/>
<rect x="1626.5" y="986" width="2" height="2" fill="#f0f0f0" shape-rendering="crispEdges"/>
<rect x="1626.5" y="990.5" width="2" height="2" fill="#f0f0f0" shape-rendering="crispEdges"/>
<rect x="1626.5" y="995" width="2" height="2" fill="#f0f0f0" shape-rendering="crispEdges"/>
<rect x="1631" y="986" width="2" height="2" fill="#f0f0f0" shape-rendering="crispEdges"/>
<rect x="1631" y="990.5" width="2" height="2" fill="#f0f0f0" shape-rendering="crispEdges"/>
<rect x="1631" y="995" width="2" height="2" fill="#f0f0f0" shape-rendering="crispEdges"/>
<path d="M1641.5 991 L1644.5 994 L1647.5 991" fill="none" stroke="#5c5c5c" stroke-width="1.3"/>
<text x="1673" y="996.6" font-size="13" fill="#e4e4e4" textLength="83" lengthAdjust="spacingAndGlyphs">Raster: 0,50 mm</text>
<text x="1775" y="996.6" font-size="13" fill="#e4e4e4" textLength="46" lengthAdjust="spacingAndGlyphs">Logik 1:1</text>
<path d="M1848.5 990 A5.4 5.4 0 1 1 1857.5 995" fill="none" stroke="#e8e8e8" stroke-width="1.4"/>
<line x1="1857" y1="995" x2="1861.5" y2="1000" stroke="#e8e8e8" stroke-width="1.6"/>
<rect x="1848" y="993" width="8" height="7.5" fill="#2a8ed0" shape-rendering="crispEdges"/>
<line x1="1848" y1="994.9" x2="1856" y2="994.9" stroke="#424242" stroke-width="0.6" shape-rendering="crispEdges"/>
<line x1="1848" y1="996.8" x2="1856" y2="996.8" stroke="#424242" stroke-width="0.6" shape-rendering="crispEdges"/>
<line x1="1848" y1="998.7" x2="1856" y2="998.7" stroke="#424242" stroke-width="0.6" shape-rendering="crispEdges"/>
<circle cx="1874" cy="991.3" r="5.6" fill="none" stroke="#e8e8e8" stroke-width="1.4"/>
<line x1="1878" y1="995.5" x2="1882" y2="1000.3" stroke="#e8e8e8" stroke-width="1.6"/>
<rect x="1868.5" y="995.5" width="9" height="5" fill="#2a8ed0" shape-rendering="crispEdges"/>
<rect x="594" y="1008" width="1326" height="2" fill="#333333" shape-rendering="crispEdges"/>
<rect x="1889.5" y="161" width="30.5" height="849" fill="#383838" shape-rendering="crispEdges"/>
<text x="1897" y="166" font-size="13" fill="#e6e6e6" textLength="113" lengthAdjust="spacingAndGlyphs" transform="rotate(90 1897 166)">Makros - 12.03.202...</text>
<rect x="1914" y="163" width="6" height="118" fill="#474747" shape-rendering="crispEdges"/>
<text x="1897" y="288" font-size="13" fill="#e6e6e6" textLength="112" lengthAdjust="spacingAndGlyphs" transform="rotate(90 1897 288)">Klemmenleisten - 1...</text>
<rect x="1914" y="285" width="6" height="118" fill="#474747" shape-rendering="crispEdges"/>
<text x="1897" y="409" font-size="13" fill="#e6e6e6" textLength="111" lengthAdjust="spacingAndGlyphs" transform="rotate(90 1897 409)">Kabel - 12.03.2026...</text>
<rect x="1914" y="407" width="6" height="116" fill="#474747" shape-rendering="crispEdges"/>
<text x="1897" y="528" font-size="13" fill="#e6e6e6" textLength="110" lengthAdjust="spacingAndGlyphs" transform="rotate(90 1897 528)">SPS - 12.03.2026-...</text>
<rect x="1914" y="526" width="6" height="115" fill="#474747" shape-rendering="crispEdges"/>
<text x="1897" y="707" font-size="13" fill="#e6e6e6" textLength="110" lengthAdjust="spacingAndGlyphs" transform="rotate(90 1897 707)">Betriebsmittel - 12....</text>
<rect x="1914" y="703" width="6" height="117" fill="#474747" shape-rendering="crispEdges"/>
<text x="1897" y="824" font-size="13" fill="#e6e6e6" textLength="109" lengthAdjust="spacingAndGlyphs" transform="rotate(90 1897 824)">Segmentvorlagen ...</text>
<rect x="1914" y="822" width="6" height="114" fill="#474747" shape-rendering="crispEdges"/>
</svg>
</body></html>
